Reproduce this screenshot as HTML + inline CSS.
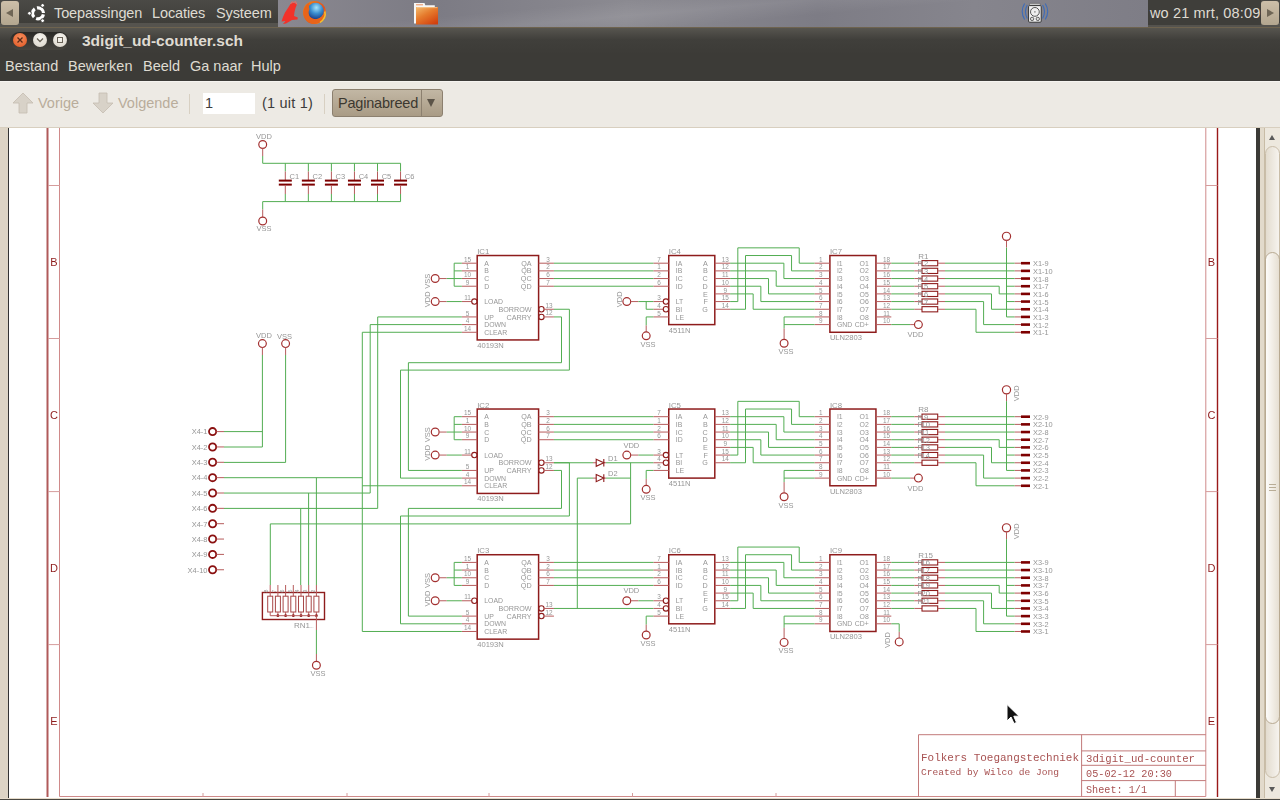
<!DOCTYPE html>
<html><head><meta charset="utf-8">
<style>
*{margin:0;padding:0;box-sizing:border-box}
html,body{width:1280px;height:800px;overflow:hidden;background:#3c3b37;font-family:"Liberation Sans",sans-serif}
.abs{position:absolute}
#panel{left:0;top:0;width:1280px;height:27px;background:linear-gradient(#4b4a46,#3c3b37)}
#wall{left:278px;top:0;width:870px;height:27px;background:linear-gradient(175deg,rgba(255,255,255,0) 30%,rgba(255,255,255,.08) 45%,rgba(255,255,255,0) 60%),linear-gradient(90deg,#8a8890 0%,#7c7b84 18%,#8b8a91 40%,#7d7c85 62%,#86858d 80%,#7e7d86 100%)}
#pline{left:0;top:27px;width:1280px;height:1px;background:#6e634f}
.ptxt{color:#dfdbd2;font-size:14.5px;top:5px;letter-spacing:-0.1px}
#title{left:0;top:28px;width:1280px;height:26px;background:linear-gradient(#57554f,#403f3b 45%,#3c3b37)}
#menu{left:0;top:54px;width:1280px;height:27px;background:#3c3b37}
.mtxt{color:#dfdbd2;font-size:14.5px;top:58px}
#tool{left:0;top:81px;width:1280px;height:46px;background:#edeae4;border-top:1px solid #f6f4f0}
#tline{left:0;top:127px;width:1280px;height:1px;background:#d8cfbf}
#doc{left:0;top:127px;width:1280px;height:673px;background:#fff}
</style></head><body>
<div id="panel" class="abs"></div>
<div class="abs" style="left:0;top:23px;width:1280px;height:4px;background:#55534e"></div>
<div id="wall" class="abs"></div>
<div id="pline" class="abs"></div>
<!-- left panel button -->
<div class="abs" style="left:1px;top:1px;width:18px;height:24px;border-radius:3px;background:linear-gradient(#cdbfa9,#b3a68f)"></div>
<div class="abs" style="left:6px;top:9px;width:0;height:0;border-top:4.5px solid transparent;border-bottom:4.5px solid transparent;border-right:7px solid #6f6656"></div>
<svg class="abs" style="left:26px;top:2px" width="22" height="22" viewBox="0 0 22 22">
 <circle cx="12" cy="11.3" r="5.5" stroke="#fff" stroke-width="3.2" fill="none" stroke-dasharray="9.2 2.32" stroke-dashoffset="-1.16"/>
 <circle cx="3.45" cy="11.3" r="1.9" fill="#fff" stroke="#3f3e3a" stroke-width="1"/><circle cx="16.6" cy="3.4" r="1.9" fill="#fff" stroke="#3f3e3a" stroke-width="1"/><circle cx="16.6" cy="18.65" r="1.9" fill="#fff" stroke="#3f3e3a" stroke-width="1"/>
</svg>
<div class="abs ptxt" style="left:54px">Toepassingen</div>
<div class="abs ptxt" style="left:152px">Locaties</div>
<div class="abs ptxt" style="left:216px">Systeem</div>
<!-- eagle icon -->
<svg class="abs" style="left:280px;top:0px" width="20" height="26" viewBox="0 0 20 26">
 <path d="M13.8 2.5 L16.9 4.5 L15.5 8 L14.5 12 L14 16 L17.8 17.5 L17.5 19.5 L12 20 L6 23.5 L3 24 L5.5 21 L1.5 21.5 L3 17 L5 12.5 L8 8 L10.5 4 Z" fill="#f2322a"/>
 <path d="M10.5 4 L12 1.8 L13.8 2.5 L15.5 1.5 L16.9 4.5" fill="none" stroke="#f06a60" stroke-width="1"/>
</svg>
<svg class="abs" style="left:302px;top:0px" width="26" height="26" viewBox="0 0 26 26">
 <defs>
  <radialGradient id="glb" cx="0.55" cy="0.3" r="0.7"><stop offset="0" stop-color="#a8e4fa"/><stop offset="0.5" stop-color="#3a8fd0"/><stop offset="1" stop-color="#1b3f8a"/></radialGradient>
  <linearGradient id="fox" x1="0" y1="0" x2="1" y2="1"><stop offset="0" stop-color="#f08a1c"/><stop offset="0.6" stop-color="#e4501a"/><stop offset="1" stop-color="#f4b02a"/></linearGradient>
 </defs>
 <circle cx="12.5" cy="12.5" r="11.5" fill="url(#fox)"/>
 <circle cx="13.5" cy="11" r="8.3" fill="url(#glb)"/>
 <path d="M1.5 11 Q3 4 8 2.5 Q6 6 7.5 9 Q5.5 13 8 17 Q12 20.5 17 18.5 Q21.5 16 22.8 11.5 Q24.5 18 18 22.5 Q12 25.5 6 22 Q1 18 1.5 11 Z" fill="#e8641a"/>
 <path d="M22.8 11.5 Q24.5 18 18 22.5" stroke="#f6c02e" stroke-width="1.5" fill="none"/>
</svg>
<!-- folder -->
<svg class="abs" style="left:412px;top:1px" width="28" height="26" viewBox="0 0 28 26">
 <defs><linearGradient id="fld" x1="0.1" y1="0" x2="0.8" y2="1"><stop offset="0" stop-color="#f2b466"/><stop offset="0.45" stop-color="#e57a2c"/><stop offset="1" stop-color="#d2400e"/></linearGradient></defs>
 <path d="M2 2 H12.5 L13.3 4.2 H22.8 V22.5 H2 Z" fill="#f6f6f4"/>
 <rect x="4" y="3.3" width="7" height="1" fill="#e89060"/>
 <path d="M4 6 H26 V23.5 H4 Z" fill="url(#fld)"/>
 <path d="M4.7 6.6 H25.3" stroke="#f8c890" stroke-width="0.8"/>
</svg>
<!-- drive icon -->
<svg class="abs" style="left:1020px;top:0px" width="30" height="26" viewBox="1020 0 30 26">
 <path d="M1027.3 5 Q1023.5 11.5 1027.3 18.5 M1024.6 3.5 Q1019.8 11.5 1024.6 19.5 M1042.6 5 Q1046.4 11.5 1042.6 18.5 M1045.3 3.5 Q1050.1 11.5 1045.3 19.5" stroke="#3e6cb8" stroke-width="1.1" fill="none"/>
 <rect x="1029.5" y="3.4" width="10.8" height="1.6" rx="0.8" fill="#f4f4f4" stroke="#444" stroke-width="0.5"/>
 <rect x="1028.6" y="5.6" width="12.6" height="16.6" rx="1" fill="#f2f2f2" stroke="#333" stroke-width="1"/>
 <circle cx="1034.9" cy="11.9" r="4.4" fill="#eee" stroke="#444" stroke-width="0.9"/>
 <circle cx="1034.9" cy="11.9" r="0.8" fill="#888"/>
 <circle cx="1032.1" cy="18.9" r="1.7" fill="#ddd" stroke="#444" stroke-width="0.8"/>
 <circle cx="1037.8" cy="18.9" r="1.7" fill="#ddd" stroke="#444" stroke-width="0.8"/>
</svg>
<!-- clock -->
<div class="abs" style="left:1148px;top:0;width:113px;height:25px;background:#3f3e3a"></div>
<div class="abs ptxt" style="left:1150px;letter-spacing:0.15px">wo 21 mrt, 08:09</div>
<div class="abs" style="left:1261px;top:1px;width:18px;height:24px;border-radius:3px;background:linear-gradient(#cdbfa9,#b3a68f)"></div>
<div class="abs" style="left:1267px;top:9px;width:0;height:0;border-top:4.5px solid transparent;border-bottom:4.5px solid transparent;border-left:7px solid #6f6656"></div>

<!-- title bar -->
<div id="title" class="abs"></div>
<div class="abs" style="left:10px;top:32px;width:59px;height:18px;border-radius:10px;background:linear-gradient(#2a2926,#47453f)"></div>
<div class="abs" style="left:13px;top:33px;width:14px;height:14px;border-radius:50%;background:radial-gradient(circle at 50% 35%,#f7915f,#e0531f)"></div>
<svg class="abs" style="left:13px;top:33px" width="14" height="14"><path d="M4.5 4.5 L9.5 9.5 M9.5 4.5 L4.5 9.5" stroke="#5a2a18" stroke-width="1.3"/></svg>
<div class="abs" style="left:33px;top:33px;width:14px;height:14px;border-radius:50%;background:radial-gradient(circle at 50% 35%,#f8f6f1,#d8d2c6)"></div>
<svg class="abs" style="left:33px;top:33px" width="14" height="14"><path d="M4 5.5 L7 8.5 L10 5.5" stroke="#6a6358" stroke-width="1.3" fill="none"/></svg>
<div class="abs" style="left:53px;top:33px;width:14px;height:14px;border-radius:50%;background:radial-gradient(circle at 50% 35%,#f8f6f1,#d8d2c6)"></div>
<div class="abs" style="left:57px;top:37px;width:6px;height:6px;border:1.3px solid #6a6358"></div>
<div class="abs" style="left:82px;top:32px;color:#dfdbd2;font-size:15.5px;font-weight:bold">3digit_ud-counter.sch</div>

<!-- menu -->
<div id="menu" class="abs"></div>
<div class="abs mtxt" style="left:5px">Bestand</div>
<div class="abs mtxt" style="left:68px">Bewerken</div>
<div class="abs mtxt" style="left:143px">Beeld</div>
<div class="abs mtxt" style="left:190px">Ga naar</div>
<div class="abs mtxt" style="left:251px">Hulp</div>

<!-- toolbar -->
<div id="tool" class="abs"></div>
<svg class="abs" style="left:12px;top:92px" width="22" height="23" viewBox="0 0 22 23">
 <path d="M11 1 L21 11 L15 11 L15 21 L7 21 L7 11 L1 11 Z" fill="#d8d2c8" stroke="#c5bdb0" stroke-width="0.8"/>
</svg>
<div class="abs" style="left:38px;top:95px;color:#b9ad9b;font-size:14.5px">Vorige</div>
<svg class="abs" style="left:92px;top:92px" width="22" height="23" viewBox="0 0 22 23">
 <path d="M7 1 L15 1 L15 11 L21 11 L11 21 L1 11 L7 11 Z" fill="#d8d2c8" stroke="#c5bdb0" stroke-width="0.8"/>
</svg>
<div class="abs" style="left:118px;top:95px;color:#b9ad9b;font-size:14.5px">Volgende</div>
<div class="abs" style="left:189px;top:94px;width:1px;height:20px;background:#d8d0c2"></div>
<div class="abs" style="left:203px;top:93px;width:52px;height:21px;background:#fff"></div>
<div class="abs" style="left:205px;top:95px;color:#3c3c3c;font-size:14.5px">1</div>
<div class="abs" style="left:262px;top:95px;color:#3c3c3c;font-size:14.5px;letter-spacing:0.2px">(1 uit 1)</div>
<div class="abs" style="left:324px;top:94px;width:1px;height:20px;background:#d8d0c2"></div>
<div class="abs" style="left:332px;top:89px;width:111px;height:28px;border-radius:3px;border:1px solid #8c806f;background:linear-gradient(#c2b7a4,#a99b85)"></div>
<div class="abs" style="left:421px;top:90px;width:1px;height:26px;background:#8c806f"></div>
<div class="abs" style="left:338px;top:95px;color:#3c3830;font-size:14.5px;letter-spacing:-0.2px">Paginabreed</div>
<div class="abs" style="left:427px;top:99px;width:0;height:0;border-left:4.5px solid transparent;border-right:4.5px solid transparent;border-top:8px solid #5c5448"></div>
<div id="tline" class="abs"></div>

<!-- document area -->
<div class="abs" style="left:0;top:128px;width:1280px;height:672px;background:#ede8de"></div>
<div class="abs" style="left:0;top:128px;width:8px;height:670px;background:#ddd4c5"></div>
<div class="abs" style="left:8px;top:128px;width:1px;height:670px;background:#333"></div>
<div class="abs" style="left:9px;top:128px;width:1247px;height:670px;background:#fff"></div>
<div class="abs" style="left:1256px;top:128px;width:4px;height:670px;background:#3b3a36"></div>
<div class="abs" style="left:1260px;top:128px;width:4px;height:670px;background:#e2dacb"></div>
<div class="abs" style="left:1264px;top:128px;width:1px;height:670px;background:#c8bca6"></div>
<div class="abs" style="left:1265px;top:128px;width:15px;height:670px;background:#ede8de"></div>
<div class="abs" style="left:1269px;top:135px;width:0;height:0;border-left:3px solid transparent;border-right:3px solid transparent;border-bottom:5px solid #5a5a5a"></div>
<div class="abs" style="left:1265px;top:146px;width:15px;height:632px;border-radius:8px;border:1px solid #c9bda8;background:linear-gradient(90deg,#e3dccf,#f6f3ee)"></div>
<div class="abs" style="left:1265px;top:252px;width:15px;height:472px;border-radius:8px;border:1px solid #b8aa92;background:linear-gradient(90deg,#fdfcfa,#e6dfd2)"></div>
<div class="abs" style="left:1269px;top:484px;width:7px;height:1px;background:#b9ad96"></div>
<div class="abs" style="left:1269px;top:487px;width:7px;height:1px;background:#b9ad96"></div>
<div class="abs" style="left:1269px;top:490px;width:7px;height:1px;background:#b9ad96"></div>
<div class="abs" style="left:1269px;top:787px;width:0;height:0;border-left:3px solid transparent;border-right:3px solid transparent;border-top:5px solid #5a5a5a"></div>
<div class="abs" style="left:0;top:798px;width:1280px;height:1px;background:#e6dccb"></div>
<div class="abs" style="left:0;top:799px;width:1280px;height:1px;background:#4a4842"></div>

<svg class="abs" style="left:0;top:0;will-change:transform" width="1280" height="798" viewBox="0 0 1280 798" font-family="Liberation Sans, sans-serif">
<g id="frame">
 <path d="M47.5 128 V797" stroke="#b05a5a" stroke-width="2"/>
 <path d="M59.5 128 V796.5 H1205.8 V128" stroke="#cf8a8a" stroke-width="1" fill="none"/>
 <path d="M1217.5 128 V797" stroke="#9a1a1a" stroke-width="1.4"/>
 <path d="M48 185.5 H60 M48 338.5 H60 M48 491.6 H60 M48 644.6 H60" stroke="#d59c9c" stroke-width="1"/>
 <path d="M1205.8 185.5 H1217.5 M1205.8 338.5 H1217.5 M1205.8 491.6 H1217.5 M1205.8 644.6 H1217.5" stroke="#d59c9c" stroke-width="1"/>
 <path d="M203 796.5 V793 M347 796.5 V793 M489 796.5 V793 M632.5 796.5 V793 M776 796.5 V793" stroke="#d59c9c" stroke-width="1"/>
 <g fill="#8e1c1c" font-size="11" text-anchor="middle">
  <text x="54" y="266">B</text><text x="54" y="419">C</text><text x="54" y="572">D</text><text x="54" y="725">E</text>
  <text x="1211.5" y="266">B</text><text x="1211.5" y="419">C</text><text x="1211.5" y="572">D</text><text x="1211.5" y="725">E</text>
 </g>
</g>
<g id="tblock" stroke="#c27a7a" stroke-width="1" fill="none">
 <path d="M918.5 796.5 V734.7 H1205.8 M1081.6 734.7 V796.5 M1081.6 750.9 H1205.8 M1081.6 765.3 H1205.8 M1081.6 780.6 H1205.8 M1175.3 780.6 V796.5"/>
</g>
<g fill="#a85252" font-family="Liberation Mono, monospace">
 <text x="921" y="761.3" font-size="11.2" textLength="158" lengthAdjust="spacingAndGlyphs">Folkers Toegangstechniek</text>
 <text x="921" y="775.3" font-size="9.5" textLength="138" lengthAdjust="spacingAndGlyphs">Created by Wilco de Jong</text>
 <text x="1086" y="762" font-size="11.2" textLength="109" lengthAdjust="spacingAndGlyphs">3digit_ud-counter</text>
 <text x="1086" y="777" font-size="11.2" textLength="86" lengthAdjust="spacingAndGlyphs">05-02-12 20:30</text>
 <text x="1086" y="792.5" font-size="11.2" textLength="61" lengthAdjust="spacingAndGlyphs">Sheet: 1/1</text>
</g>
<g id="sch">
<rect x="477.20" y="255.52" width="61.40" height="84.42" stroke="#8e1c1c" stroke-width="1.5" fill="none"/>
<text x="477.20" y="254.02" font-size="7.8" text-anchor="start" fill="#969696">IC1</text>
<text x="477.20" y="347.95" font-size="7.6" text-anchor="start" fill="#969696">40193N</text>
<path d="M461.85 263.20 L477.20 263.20" stroke="#b65c5c" stroke-width="1" fill="none"/>
<text x="484.20" y="265.80" font-size="6.9" text-anchor="start" fill="#969696">A</text>
<text x="467.60" y="261.80" font-size="6.4" text-anchor="middle" fill="#969696">15</text>
<path d="M461.85 270.88 L477.20 270.88" stroke="#b65c5c" stroke-width="1" fill="none"/>
<text x="484.20" y="273.48" font-size="6.9" text-anchor="start" fill="#969696">B</text>
<text x="467.60" y="269.48" font-size="6.4" text-anchor="middle" fill="#969696">1</text>
<path d="M461.85 278.55 L477.20 278.55" stroke="#b65c5c" stroke-width="1" fill="none"/>
<text x="484.20" y="281.15" font-size="6.9" text-anchor="start" fill="#969696">C</text>
<text x="467.60" y="277.15" font-size="6.4" text-anchor="middle" fill="#969696">10</text>
<path d="M461.85 286.22 L477.20 286.22" stroke="#b65c5c" stroke-width="1" fill="none"/>
<text x="484.20" y="288.82" font-size="6.9" text-anchor="start" fill="#969696">D</text>
<text x="467.60" y="284.82" font-size="6.4" text-anchor="middle" fill="#969696">9</text>
<path d="M461.85 301.57 L471.70 301.57" stroke="#b65c5c" stroke-width="1" fill="none"/>
<circle cx="474.40" cy="301.57" r="2.70" stroke="#8e1c1c" stroke-width="1.1" fill="none"/>
<text x="484.20" y="304.18" font-size="6.9" text-anchor="start" fill="#969696">LOAD</text>
<text x="467.60" y="300.18" font-size="6.4" text-anchor="middle" fill="#969696">11</text>
<path d="M461.85 316.93 L477.20 316.93" stroke="#b65c5c" stroke-width="1" fill="none"/>
<text x="484.20" y="319.53" font-size="6.9" text-anchor="start" fill="#969696">UP</text>
<text x="467.60" y="315.53" font-size="6.4" text-anchor="middle" fill="#969696">5</text>
<path d="M461.85 324.60 L477.20 324.60" stroke="#b65c5c" stroke-width="1" fill="none"/>
<text x="484.20" y="327.20" font-size="6.9" text-anchor="start" fill="#969696">DOWN</text>
<text x="467.60" y="323.20" font-size="6.4" text-anchor="middle" fill="#969696">4</text>
<path d="M461.85 332.27 L477.20 332.27" stroke="#b65c5c" stroke-width="1" fill="none"/>
<text x="484.20" y="334.88" font-size="6.9" text-anchor="start" fill="#969696">CLEAR</text>
<text x="467.60" y="330.88" font-size="6.4" text-anchor="middle" fill="#969696">14</text>
<path d="M538.60 263.20 L553.95 263.20" stroke="#b65c5c" stroke-width="1" fill="none"/>
<text x="531.60" y="265.80" font-size="7.2" text-anchor="end" fill="#969696">QA</text>
<text x="548.10" y="261.80" font-size="6.4" text-anchor="middle" fill="#969696">3</text>
<path d="M538.60 270.88 L553.95 270.88" stroke="#b65c5c" stroke-width="1" fill="none"/>
<text x="531.60" y="273.48" font-size="7.2" text-anchor="end" fill="#969696">QB</text>
<text x="548.10" y="269.48" font-size="6.4" text-anchor="middle" fill="#969696">2</text>
<path d="M538.60 278.55 L553.95 278.55" stroke="#b65c5c" stroke-width="1" fill="none"/>
<text x="531.60" y="281.15" font-size="7.2" text-anchor="end" fill="#969696">QC</text>
<text x="548.10" y="277.15" font-size="6.4" text-anchor="middle" fill="#969696">6</text>
<path d="M538.60 286.22 L553.95 286.22" stroke="#b65c5c" stroke-width="1" fill="none"/>
<text x="531.60" y="288.82" font-size="7.2" text-anchor="end" fill="#969696">QD</text>
<text x="548.10" y="284.82" font-size="6.4" text-anchor="middle" fill="#969696">7</text>
<circle cx="541.40" cy="309.25" r="2.70" stroke="#8e1c1c" stroke-width="1.1" fill="none"/>
<path d="M544.10 309.25 L553.95 309.25" stroke="#b65c5c" stroke-width="1" fill="none"/>
<text x="531.60" y="311.85" font-size="7.2" text-anchor="end" fill="#969696">BORROW</text>
<text x="549.10" y="307.65" font-size="6.4" text-anchor="middle" fill="#969696">13</text>
<circle cx="541.40" cy="316.93" r="2.70" stroke="#8e1c1c" stroke-width="1.1" fill="none"/>
<path d="M544.10 316.93 L553.95 316.93" stroke="#b65c5c" stroke-width="1" fill="none"/>
<text x="531.60" y="319.53" font-size="7.2" text-anchor="end" fill="#969696">CARRY</text>
<text x="549.10" y="315.32" font-size="6.4" text-anchor="middle" fill="#969696">12</text>
<rect x="668.75" y="255.52" width="46.05" height="69.08" stroke="#8e1c1c" stroke-width="1.5" fill="none"/>
<text x="668.75" y="254.02" font-size="7.8" text-anchor="start" fill="#969696">IC4</text>
<text x="668.75" y="332.60" font-size="7.6" text-anchor="start" fill="#969696">4511N</text>
<path d="M653.40 263.20 L668.75 263.20" stroke="#b65c5c" stroke-width="1" fill="none"/>
<text x="675.75" y="265.80" font-size="6.9" text-anchor="start" fill="#969696">IA</text>
<text x="659.15" y="261.80" font-size="6.4" text-anchor="middle" fill="#969696">7</text>
<path d="M653.40 270.88 L668.75 270.88" stroke="#b65c5c" stroke-width="1" fill="none"/>
<text x="675.75" y="273.48" font-size="6.9" text-anchor="start" fill="#969696">IB</text>
<text x="659.15" y="269.48" font-size="6.4" text-anchor="middle" fill="#969696">1</text>
<path d="M653.40 278.55 L668.75 278.55" stroke="#b65c5c" stroke-width="1" fill="none"/>
<text x="675.75" y="281.15" font-size="6.9" text-anchor="start" fill="#969696">IC</text>
<text x="659.15" y="277.15" font-size="6.4" text-anchor="middle" fill="#969696">2</text>
<path d="M653.40 286.22 L668.75 286.22" stroke="#b65c5c" stroke-width="1" fill="none"/>
<text x="675.75" y="288.82" font-size="6.9" text-anchor="start" fill="#969696">ID</text>
<text x="659.15" y="284.82" font-size="6.4" text-anchor="middle" fill="#969696">6</text>
<path d="M653.40 301.57 L663.25 301.57" stroke="#b65c5c" stroke-width="1" fill="none"/>
<circle cx="665.95" cy="301.57" r="2.70" stroke="#8e1c1c" stroke-width="1.1" fill="none"/>
<text x="675.75" y="304.18" font-size="6.9" text-anchor="start" fill="#969696">LT</text>
<text x="659.15" y="300.18" font-size="6.4" text-anchor="middle" fill="#969696">3</text>
<path d="M653.40 309.25 L663.25 309.25" stroke="#b65c5c" stroke-width="1" fill="none"/>
<circle cx="665.95" cy="309.25" r="2.70" stroke="#8e1c1c" stroke-width="1.1" fill="none"/>
<text x="675.75" y="311.85" font-size="6.9" text-anchor="start" fill="#969696">BI</text>
<text x="659.15" y="307.85" font-size="6.4" text-anchor="middle" fill="#969696">4</text>
<path d="M653.40 316.93 L668.75 316.93" stroke="#b65c5c" stroke-width="1" fill="none"/>
<text x="675.75" y="319.53" font-size="6.9" text-anchor="start" fill="#969696">LE</text>
<text x="659.15" y="315.53" font-size="6.4" text-anchor="middle" fill="#969696">5</text>
<path d="M714.80 263.20 L730.15 263.20" stroke="#b65c5c" stroke-width="1" fill="none"/>
<text x="707.80" y="265.80" font-size="7.2" text-anchor="end" fill="#969696">A</text>
<text x="725.30" y="261.80" font-size="6.4" text-anchor="middle" fill="#969696">13</text>
<path d="M714.80 270.88 L730.15 270.88" stroke="#b65c5c" stroke-width="1" fill="none"/>
<text x="707.80" y="273.48" font-size="7.2" text-anchor="end" fill="#969696">B</text>
<text x="725.30" y="269.48" font-size="6.4" text-anchor="middle" fill="#969696">12</text>
<path d="M714.80 278.55 L730.15 278.55" stroke="#b65c5c" stroke-width="1" fill="none"/>
<text x="707.80" y="281.15" font-size="7.2" text-anchor="end" fill="#969696">C</text>
<text x="725.30" y="277.15" font-size="6.4" text-anchor="middle" fill="#969696">11</text>
<path d="M714.80 286.22 L730.15 286.22" stroke="#b65c5c" stroke-width="1" fill="none"/>
<text x="707.80" y="288.82" font-size="7.2" text-anchor="end" fill="#969696">D</text>
<text x="725.30" y="284.82" font-size="6.4" text-anchor="middle" fill="#969696">10</text>
<path d="M714.80 293.90 L730.15 293.90" stroke="#b65c5c" stroke-width="1" fill="none"/>
<text x="707.80" y="296.50" font-size="7.2" text-anchor="end" fill="#969696">E</text>
<text x="725.30" y="292.50" font-size="6.4" text-anchor="middle" fill="#969696">9</text>
<path d="M714.80 301.57 L730.15 301.57" stroke="#b65c5c" stroke-width="1" fill="none"/>
<text x="707.80" y="304.18" font-size="7.2" text-anchor="end" fill="#969696">F</text>
<text x="725.30" y="300.18" font-size="6.4" text-anchor="middle" fill="#969696">15</text>
<path d="M714.80 309.25 L730.15 309.25" stroke="#b65c5c" stroke-width="1" fill="none"/>
<text x="707.80" y="311.85" font-size="7.2" text-anchor="end" fill="#969696">G</text>
<text x="725.30" y="307.85" font-size="6.4" text-anchor="middle" fill="#969696">14</text>
<rect x="829.90" y="255.52" width="46.05" height="76.75" stroke="#8e1c1c" stroke-width="1.5" fill="none"/>
<text x="829.90" y="254.02" font-size="7.8" text-anchor="start" fill="#969696">IC7</text>
<text x="829.90" y="340.27" font-size="7.6" text-anchor="start" fill="#969696">ULN2803</text>
<path d="M814.55 263.20 L829.90 263.20" stroke="#b65c5c" stroke-width="1" fill="none"/>
<text x="836.90" y="265.80" font-size="6.9" text-anchor="start" fill="#969696">I1</text>
<text x="820.70" y="261.80" font-size="6.4" text-anchor="middle" fill="#969696">1</text>
<path d="M875.95 263.20 L891.30 263.20" stroke="#b65c5c" stroke-width="1" fill="none"/>
<text x="868.75" y="265.80" font-size="6.9" text-anchor="end" fill="#969696">O1</text>
<text x="886.45" y="261.80" font-size="6.4" text-anchor="middle" fill="#969696">18</text>
<path d="M814.55 270.88 L829.90 270.88" stroke="#b65c5c" stroke-width="1" fill="none"/>
<text x="836.90" y="273.48" font-size="6.9" text-anchor="start" fill="#969696">I2</text>
<text x="820.70" y="269.48" font-size="6.4" text-anchor="middle" fill="#969696">2</text>
<path d="M875.95 270.88 L891.30 270.88" stroke="#b65c5c" stroke-width="1" fill="none"/>
<text x="868.75" y="273.48" font-size="6.9" text-anchor="end" fill="#969696">O2</text>
<text x="886.45" y="269.48" font-size="6.4" text-anchor="middle" fill="#969696">17</text>
<path d="M814.55 278.55 L829.90 278.55" stroke="#b65c5c" stroke-width="1" fill="none"/>
<text x="836.90" y="281.15" font-size="6.9" text-anchor="start" fill="#969696">I3</text>
<text x="820.70" y="277.15" font-size="6.4" text-anchor="middle" fill="#969696">3</text>
<path d="M875.95 278.55 L891.30 278.55" stroke="#b65c5c" stroke-width="1" fill="none"/>
<text x="868.75" y="281.15" font-size="6.9" text-anchor="end" fill="#969696">O3</text>
<text x="886.45" y="277.15" font-size="6.4" text-anchor="middle" fill="#969696">16</text>
<path d="M814.55 286.22 L829.90 286.22" stroke="#b65c5c" stroke-width="1" fill="none"/>
<text x="836.90" y="288.82" font-size="6.9" text-anchor="start" fill="#969696">I4</text>
<text x="820.70" y="284.82" font-size="6.4" text-anchor="middle" fill="#969696">4</text>
<path d="M875.95 286.22 L891.30 286.22" stroke="#b65c5c" stroke-width="1" fill="none"/>
<text x="868.75" y="288.82" font-size="6.9" text-anchor="end" fill="#969696">O4</text>
<text x="886.45" y="284.82" font-size="6.4" text-anchor="middle" fill="#969696">15</text>
<path d="M814.55 293.90 L829.90 293.90" stroke="#b65c5c" stroke-width="1" fill="none"/>
<text x="836.90" y="296.50" font-size="6.9" text-anchor="start" fill="#969696">I5</text>
<text x="820.70" y="292.50" font-size="6.4" text-anchor="middle" fill="#969696">5</text>
<path d="M875.95 293.90 L891.30 293.90" stroke="#b65c5c" stroke-width="1" fill="none"/>
<text x="868.75" y="296.50" font-size="6.9" text-anchor="end" fill="#969696">O5</text>
<text x="886.45" y="292.50" font-size="6.4" text-anchor="middle" fill="#969696">14</text>
<path d="M814.55 301.57 L829.90 301.57" stroke="#b65c5c" stroke-width="1" fill="none"/>
<text x="836.90" y="304.18" font-size="6.9" text-anchor="start" fill="#969696">I6</text>
<text x="820.70" y="300.18" font-size="6.4" text-anchor="middle" fill="#969696">6</text>
<path d="M875.95 301.57 L891.30 301.57" stroke="#b65c5c" stroke-width="1" fill="none"/>
<text x="868.75" y="304.18" font-size="6.9" text-anchor="end" fill="#969696">O6</text>
<text x="886.45" y="300.18" font-size="6.4" text-anchor="middle" fill="#969696">13</text>
<path d="M814.55 309.25 L829.90 309.25" stroke="#b65c5c" stroke-width="1" fill="none"/>
<text x="836.90" y="311.85" font-size="6.9" text-anchor="start" fill="#969696">I7</text>
<text x="820.70" y="307.85" font-size="6.4" text-anchor="middle" fill="#969696">7</text>
<path d="M875.95 309.25 L891.30 309.25" stroke="#b65c5c" stroke-width="1" fill="none"/>
<text x="868.75" y="311.85" font-size="6.9" text-anchor="end" fill="#969696">O7</text>
<text x="886.45" y="307.85" font-size="6.4" text-anchor="middle" fill="#969696">12</text>
<path d="M814.55 316.93 L829.90 316.93" stroke="#b65c5c" stroke-width="1" fill="none"/>
<text x="836.90" y="319.53" font-size="6.9" text-anchor="start" fill="#969696">I8</text>
<text x="820.70" y="315.53" font-size="6.4" text-anchor="middle" fill="#969696">8</text>
<path d="M875.95 316.93 L891.30 316.93" stroke="#b65c5c" stroke-width="1" fill="none"/>
<text x="868.75" y="319.53" font-size="6.9" text-anchor="end" fill="#969696">O8</text>
<text x="886.45" y="315.53" font-size="6.4" text-anchor="middle" fill="#969696">11</text>
<path d="M814.55 324.60 L829.90 324.60" stroke="#b65c5c" stroke-width="1" fill="none"/>
<text x="836.90" y="327.20" font-size="6.9" text-anchor="start" fill="#969696">GND</text>
<text x="820.70" y="323.20" font-size="6.4" text-anchor="middle" fill="#969696">9</text>
<path d="M875.95 324.60 L891.30 324.60" stroke="#b65c5c" stroke-width="1" fill="none"/>
<text x="868.75" y="327.20" font-size="6.9" text-anchor="end" fill="#969696">CD+</text>
<text x="886.45" y="323.20" font-size="6.4" text-anchor="middle" fill="#969696">10</text>
<path d="M454.18 263.20 L454.18 286.22" stroke="#52ad52" stroke-width="1" fill="none"/>
<path d="M454.18 263.20 L461.85 263.20" stroke="#52ad52" stroke-width="1" fill="none"/>
<path d="M454.18 270.88 L461.85 270.88" stroke="#52ad52" stroke-width="1" fill="none"/>
<path d="M454.18 278.55 L461.85 278.55" stroke="#52ad52" stroke-width="1" fill="none"/>
<path d="M454.18 286.22 L461.85 286.22" stroke="#52ad52" stroke-width="1" fill="none"/>
<circle cx="435.20" cy="278.55" r="3.90" stroke="#a33030" stroke-width="1.2" fill="none"/>
<path d="M439.10 278.55 L446.70 278.55" stroke="#b65c5c" stroke-width="1" fill="none"/>
<path d="M446.70 278.55 L454.18 278.55" stroke="#52ad52" stroke-width="1" fill="none"/>
<text x="430.40" y="281.35" font-size="7.5" text-anchor="middle" fill="#969696" transform="rotate(-90 430.40 281.35)">VSS</text>
<circle cx="435.20" cy="301.57" r="3.90" stroke="#a33030" stroke-width="1.2" fill="none"/>
<path d="M439.10 301.57 L446.70 301.57" stroke="#b65c5c" stroke-width="1" fill="none"/>
<path d="M446.70 301.57 L461.85 301.57" stroke="#52ad52" stroke-width="1" fill="none"/>
<text x="430.40" y="299.27" font-size="7.5" text-anchor="middle" fill="#969696" transform="rotate(-90 430.40 299.27)">VDD</text>
<path d="M553.95 263.20 L653.40 263.20" stroke="#52ad52" stroke-width="1" fill="none"/>
<path d="M553.95 270.88 L653.40 270.88" stroke="#52ad52" stroke-width="1" fill="none"/>
<path d="M553.95 278.55 L653.40 278.55" stroke="#52ad52" stroke-width="1" fill="none"/>
<path d="M553.95 286.22 L653.40 286.22" stroke="#52ad52" stroke-width="1" fill="none"/>
<circle cx="626.80" cy="301.57" r="3.90" stroke="#a33030" stroke-width="1.2" fill="none"/>
<path d="M630.70 301.57 L638.40 301.57" stroke="#b65c5c" stroke-width="1" fill="none"/>
<path d="M638.40 301.57 L653.40 301.57" stroke="#52ad52" stroke-width="1" fill="none"/>
<text x="621.80" y="299.27" font-size="7.5" text-anchor="middle" fill="#969696" transform="rotate(-90 621.80 299.27)">VDD</text>
<path d="M646.20 301.57 L646.20 309.25 L653.40 309.25" stroke="#52ad52" stroke-width="1" fill="none"/>
<path d="M653.40 316.93 L646.20 316.93 L646.20 325.43" stroke="#52ad52" stroke-width="1" fill="none"/>
<path d="M646.20 325.43 L646.20 331.93" stroke="#b65c5c" stroke-width="1" fill="none"/>
<circle cx="646.20" cy="335.82" r="3.90" stroke="#a33030" stroke-width="1.2" fill="none"/>
<text x="648.00" y="346.93" font-size="7.5" text-anchor="middle" fill="#969696">VSS</text>
<path d="M730.15 263.20 L783.88 263.20 L783.88 278.55 L814.55 278.55" stroke="#52ad52" stroke-width="1" fill="none"/>
<path d="M730.15 270.88 L776.20 270.88 L776.20 286.22 L814.55 286.22" stroke="#52ad52" stroke-width="1" fill="none"/>
<path d="M730.15 278.55 L768.52 278.55 L768.52 293.90 L814.55 293.90" stroke="#52ad52" stroke-width="1" fill="none"/>
<path d="M730.15 286.22 L760.85 286.22 L760.85 301.57 L814.55 301.57" stroke="#52ad52" stroke-width="1" fill="none"/>
<path d="M730.15 293.90 L753.17 293.90 L753.17 309.25 L814.55 309.25" stroke="#52ad52" stroke-width="1" fill="none"/>
<path d="M730.15 301.57 L737.82 301.57 L737.82 247.85 L799.23 247.85 L799.23 263.20 L814.55 263.20" stroke="#52ad52" stroke-width="1" fill="none"/>
<path d="M730.15 309.25 L745.50 309.25 L745.50 255.52 L791.55 255.52 L791.55 270.88 L814.55 270.88" stroke="#52ad52" stroke-width="1" fill="none"/>
<path d="M814.55 316.93 L784.10 316.93 L784.10 328.60" stroke="#52ad52" stroke-width="1" fill="none"/>
<path d="M784.10 324.60 L814.55 324.60" stroke="#52ad52" stroke-width="1" fill="none"/>
<path d="M784.10 328.60 L784.10 339.20" stroke="#b65c5c" stroke-width="1" fill="none"/>
<circle cx="784.10" cy="343.20" r="3.90" stroke="#a33030" stroke-width="1.2" fill="none"/>
<text x="786.10" y="354.10" font-size="7.5" text-anchor="middle" fill="#969696">VSS</text>
<path d="M891.30 324.60 L910.12 324.60" stroke="#52ad52" stroke-width="1" fill="none"/>
<path d="M910.12 324.60 L914.50 324.60" stroke="#b65c5c" stroke-width="1" fill="none"/>
<circle cx="918.40" cy="324.60" r="3.90" stroke="#a33030" stroke-width="1.2" fill="none"/>
<text x="915.50" y="337.10" font-size="7.5" text-anchor="middle" fill="#969696">VDD</text>
<path d="M891.30 263.20 L914.32 263.20" stroke="#52ad52" stroke-width="1" fill="none"/>
<path d="M914.32 263.20 L922.00 263.20" stroke="#b65c5c" stroke-width="1" fill="none"/>
<rect x="922.00" y="260.60" width="15.70" height="5.20" stroke="#8e1c1c" stroke-width="1.1" fill="none"/>
<path d="M937.70 263.20 L945.00 263.20" stroke="#b65c5c" stroke-width="1" fill="none"/>
<path d="M891.30 270.88 L914.32 270.88" stroke="#52ad52" stroke-width="1" fill="none"/>
<path d="M914.32 270.88 L922.00 270.88" stroke="#b65c5c" stroke-width="1" fill="none"/>
<rect x="922.00" y="268.27" width="15.70" height="5.20" stroke="#8e1c1c" stroke-width="1.1" fill="none"/>
<path d="M937.70 270.88 L945.00 270.88" stroke="#b65c5c" stroke-width="1" fill="none"/>
<path d="M891.30 278.55 L914.32 278.55" stroke="#52ad52" stroke-width="1" fill="none"/>
<path d="M914.32 278.55 L922.00 278.55" stroke="#b65c5c" stroke-width="1" fill="none"/>
<rect x="922.00" y="275.95" width="15.70" height="5.20" stroke="#8e1c1c" stroke-width="1.1" fill="none"/>
<path d="M937.70 278.55 L945.00 278.55" stroke="#b65c5c" stroke-width="1" fill="none"/>
<path d="M891.30 286.22 L914.32 286.22" stroke="#52ad52" stroke-width="1" fill="none"/>
<path d="M914.32 286.22 L922.00 286.22" stroke="#b65c5c" stroke-width="1" fill="none"/>
<rect x="922.00" y="283.62" width="15.70" height="5.20" stroke="#8e1c1c" stroke-width="1.1" fill="none"/>
<path d="M937.70 286.22 L945.00 286.22" stroke="#b65c5c" stroke-width="1" fill="none"/>
<path d="M891.30 293.90 L914.32 293.90" stroke="#52ad52" stroke-width="1" fill="none"/>
<path d="M914.32 293.90 L922.00 293.90" stroke="#b65c5c" stroke-width="1" fill="none"/>
<rect x="922.00" y="291.30" width="15.70" height="5.20" stroke="#8e1c1c" stroke-width="1.1" fill="none"/>
<path d="M937.70 293.90 L945.00 293.90" stroke="#b65c5c" stroke-width="1" fill="none"/>
<path d="M891.30 301.57 L914.32 301.57" stroke="#52ad52" stroke-width="1" fill="none"/>
<path d="M914.32 301.57 L922.00 301.57" stroke="#b65c5c" stroke-width="1" fill="none"/>
<rect x="922.00" y="298.97" width="15.70" height="5.20" stroke="#8e1c1c" stroke-width="1.1" fill="none"/>
<path d="M937.70 301.57 L945.00 301.57" stroke="#b65c5c" stroke-width="1" fill="none"/>
<path d="M891.30 309.25 L914.32 309.25" stroke="#52ad52" stroke-width="1" fill="none"/>
<path d="M914.32 309.25 L922.00 309.25" stroke="#b65c5c" stroke-width="1" fill="none"/>
<rect x="922.00" y="306.65" width="15.70" height="5.20" stroke="#8e1c1c" stroke-width="1.1" fill="none"/>
<path d="M937.70 309.25 L945.00 309.25" stroke="#b65c5c" stroke-width="1" fill="none"/>
<text x="918.20" y="258.70" font-size="8" text-anchor="start" fill="#969696">R1</text>
<text x="917.60" y="266.20" font-size="7.5" text-anchor="start" fill="#969696">R</text>
<text x="924.00" y="266.20" font-size="7.5" text-anchor="start" fill="#969696">2</text>
<text x="917.60" y="273.88" font-size="7.5" text-anchor="start" fill="#969696">R</text>
<text x="924.00" y="273.88" font-size="7.5" text-anchor="start" fill="#969696">3</text>
<text x="917.60" y="281.55" font-size="7.5" text-anchor="start" fill="#969696">R</text>
<text x="924.00" y="281.55" font-size="7.5" text-anchor="start" fill="#969696">4</text>
<text x="917.60" y="289.22" font-size="7.5" text-anchor="start" fill="#969696">R</text>
<text x="924.00" y="289.22" font-size="7.5" text-anchor="start" fill="#969696">5</text>
<text x="917.60" y="296.90" font-size="7.5" text-anchor="start" fill="#969696">R</text>
<text x="924.00" y="296.90" font-size="7.5" text-anchor="start" fill="#969696">6</text>
<text x="917.60" y="304.57" font-size="7.5" text-anchor="start" fill="#969696">R</text>
<text x="924.00" y="304.57" font-size="7.5" text-anchor="start" fill="#969696">7</text>
<path d="M1014.60 263.20 L1021.00 263.20" stroke="#b65c5c" stroke-width="1" fill="none"/>
<rect x="1021" y="261.90" width="9" height="2.6" fill="#7d0000"/>
<text x="1033.00" y="266.20" font-size="7.4" text-anchor="start" fill="#969696">X1-9</text>
<path d="M1014.60 270.88 L1021.00 270.88" stroke="#b65c5c" stroke-width="1" fill="none"/>
<rect x="1021" y="269.57" width="9" height="2.6" fill="#7d0000"/>
<text x="1033.00" y="273.88" font-size="7.4" text-anchor="start" fill="#969696">X1-10</text>
<path d="M1014.60 278.55 L1021.00 278.55" stroke="#b65c5c" stroke-width="1" fill="none"/>
<rect x="1021" y="277.25" width="9" height="2.6" fill="#7d0000"/>
<text x="1033.00" y="281.55" font-size="7.4" text-anchor="start" fill="#969696">X1-8</text>
<path d="M1014.60 286.22 L1021.00 286.22" stroke="#b65c5c" stroke-width="1" fill="none"/>
<rect x="1021" y="284.92" width="9" height="2.6" fill="#7d0000"/>
<text x="1033.00" y="289.22" font-size="7.4" text-anchor="start" fill="#969696">X1-7</text>
<path d="M1014.60 293.90 L1021.00 293.90" stroke="#b65c5c" stroke-width="1" fill="none"/>
<rect x="1021" y="292.60" width="9" height="2.6" fill="#7d0000"/>
<text x="1033.00" y="296.90" font-size="7.4" text-anchor="start" fill="#969696">X1-6</text>
<path d="M1014.60 301.57 L1021.00 301.57" stroke="#b65c5c" stroke-width="1" fill="none"/>
<rect x="1021" y="300.27" width="9" height="2.6" fill="#7d0000"/>
<text x="1033.00" y="304.57" font-size="7.4" text-anchor="start" fill="#969696">X1-5</text>
<path d="M1014.60 309.25 L1021.00 309.25" stroke="#b65c5c" stroke-width="1" fill="none"/>
<rect x="1021" y="307.95" width="9" height="2.6" fill="#7d0000"/>
<text x="1033.00" y="312.25" font-size="7.4" text-anchor="start" fill="#969696">X1-4</text>
<path d="M1014.60 316.93 L1021.00 316.93" stroke="#b65c5c" stroke-width="1" fill="none"/>
<rect x="1021" y="315.62" width="9" height="2.6" fill="#7d0000"/>
<text x="1033.00" y="319.93" font-size="7.4" text-anchor="start" fill="#969696">X1-3</text>
<path d="M1014.60 324.60 L1021.00 324.60" stroke="#b65c5c" stroke-width="1" fill="none"/>
<rect x="1021" y="323.30" width="9" height="2.6" fill="#7d0000"/>
<text x="1033.00" y="327.60" font-size="7.4" text-anchor="start" fill="#969696">X1-2</text>
<path d="M1014.60 332.27 L1021.00 332.27" stroke="#b65c5c" stroke-width="1" fill="none"/>
<rect x="1021" y="330.97" width="9" height="2.6" fill="#7d0000"/>
<text x="1033.00" y="335.27" font-size="7.4" text-anchor="start" fill="#969696">X1-1</text>
<path d="M945.00 263.20 L1014.60 263.20" stroke="#52ad52" stroke-width="1" fill="none"/>
<path d="M945.00 270.88 L1014.60 270.88" stroke="#52ad52" stroke-width="1" fill="none"/>
<path d="M945.00 278.55 L1014.60 278.55" stroke="#52ad52" stroke-width="1" fill="none"/>
<path d="M945.00 286.22 L999.20 286.22 L999.20 293.90 L1014.60 293.90" stroke="#52ad52" stroke-width="1" fill="none"/>
<path d="M945.00 293.90 L991.50 293.90 L991.50 309.25 L1014.60 309.25" stroke="#52ad52" stroke-width="1" fill="none"/>
<path d="M945.00 301.57 L983.60 301.57 L983.60 324.60 L1014.60 324.60" stroke="#52ad52" stroke-width="1" fill="none"/>
<path d="M945.00 309.25 L976.00 309.25 L976.00 332.27 L1014.60 332.27" stroke="#52ad52" stroke-width="1" fill="none"/>
<circle cx="1006.50" cy="236.34" r="4.10" stroke="#a33030" stroke-width="1.2" fill="none"/>
<path d="M1006.50 240.44 L1006.50 247.64" stroke="#b65c5c" stroke-width="1" fill="none"/>
<path d="M1006.50 247.64 L1006.50 316.93 L1014.60 316.93" stroke="#52ad52" stroke-width="1" fill="none"/>
<path d="M1006.50 286.22 L1014.60 286.22" stroke="#52ad52" stroke-width="1" fill="none"/>
<path d="M1006.50 301.57 L1014.60 301.57" stroke="#52ad52" stroke-width="1" fill="none"/>
<rect x="477.20" y="409.02" width="61.40" height="84.42" stroke="#8e1c1c" stroke-width="1.5" fill="none"/>
<text x="477.20" y="407.52" font-size="7.8" text-anchor="start" fill="#969696">IC2</text>
<text x="477.20" y="501.45" font-size="7.6" text-anchor="start" fill="#969696">40193N</text>
<path d="M461.85 416.70 L477.20 416.70" stroke="#b65c5c" stroke-width="1" fill="none"/>
<text x="484.20" y="419.30" font-size="6.9" text-anchor="start" fill="#969696">A</text>
<text x="467.60" y="415.30" font-size="6.4" text-anchor="middle" fill="#969696">15</text>
<path d="M461.85 424.38 L477.20 424.38" stroke="#b65c5c" stroke-width="1" fill="none"/>
<text x="484.20" y="426.98" font-size="6.9" text-anchor="start" fill="#969696">B</text>
<text x="467.60" y="422.98" font-size="6.4" text-anchor="middle" fill="#969696">1</text>
<path d="M461.85 432.05 L477.20 432.05" stroke="#b65c5c" stroke-width="1" fill="none"/>
<text x="484.20" y="434.65" font-size="6.9" text-anchor="start" fill="#969696">C</text>
<text x="467.60" y="430.65" font-size="6.4" text-anchor="middle" fill="#969696">10</text>
<path d="M461.85 439.72 L477.20 439.72" stroke="#b65c5c" stroke-width="1" fill="none"/>
<text x="484.20" y="442.32" font-size="6.9" text-anchor="start" fill="#969696">D</text>
<text x="467.60" y="438.32" font-size="6.4" text-anchor="middle" fill="#969696">9</text>
<path d="M461.85 455.07 L471.70 455.07" stroke="#b65c5c" stroke-width="1" fill="none"/>
<circle cx="474.40" cy="455.07" r="2.70" stroke="#8e1c1c" stroke-width="1.1" fill="none"/>
<text x="484.20" y="457.68" font-size="6.9" text-anchor="start" fill="#969696">LOAD</text>
<text x="467.60" y="453.68" font-size="6.4" text-anchor="middle" fill="#969696">11</text>
<path d="M461.85 470.43 L477.20 470.43" stroke="#b65c5c" stroke-width="1" fill="none"/>
<text x="484.20" y="473.03" font-size="6.9" text-anchor="start" fill="#969696">UP</text>
<text x="467.60" y="469.03" font-size="6.4" text-anchor="middle" fill="#969696">5</text>
<path d="M461.85 478.10 L477.20 478.10" stroke="#b65c5c" stroke-width="1" fill="none"/>
<text x="484.20" y="480.70" font-size="6.9" text-anchor="start" fill="#969696">DOWN</text>
<text x="467.60" y="476.70" font-size="6.4" text-anchor="middle" fill="#969696">4</text>
<path d="M461.85 485.77 L477.20 485.77" stroke="#b65c5c" stroke-width="1" fill="none"/>
<text x="484.20" y="488.38" font-size="6.9" text-anchor="start" fill="#969696">CLEAR</text>
<text x="467.60" y="484.38" font-size="6.4" text-anchor="middle" fill="#969696">14</text>
<path d="M538.60 416.70 L553.95 416.70" stroke="#b65c5c" stroke-width="1" fill="none"/>
<text x="531.60" y="419.30" font-size="7.2" text-anchor="end" fill="#969696">QA</text>
<text x="548.10" y="415.30" font-size="6.4" text-anchor="middle" fill="#969696">3</text>
<path d="M538.60 424.38 L553.95 424.38" stroke="#b65c5c" stroke-width="1" fill="none"/>
<text x="531.60" y="426.98" font-size="7.2" text-anchor="end" fill="#969696">QB</text>
<text x="548.10" y="422.98" font-size="6.4" text-anchor="middle" fill="#969696">2</text>
<path d="M538.60 432.05 L553.95 432.05" stroke="#b65c5c" stroke-width="1" fill="none"/>
<text x="531.60" y="434.65" font-size="7.2" text-anchor="end" fill="#969696">QC</text>
<text x="548.10" y="430.65" font-size="6.4" text-anchor="middle" fill="#969696">6</text>
<path d="M538.60 439.72 L553.95 439.72" stroke="#b65c5c" stroke-width="1" fill="none"/>
<text x="531.60" y="442.32" font-size="7.2" text-anchor="end" fill="#969696">QD</text>
<text x="548.10" y="438.32" font-size="6.4" text-anchor="middle" fill="#969696">7</text>
<circle cx="541.40" cy="462.75" r="2.70" stroke="#8e1c1c" stroke-width="1.1" fill="none"/>
<path d="M544.10 462.75 L553.95 462.75" stroke="#b65c5c" stroke-width="1" fill="none"/>
<text x="531.60" y="465.35" font-size="7.2" text-anchor="end" fill="#969696">BORROW</text>
<text x="549.10" y="461.15" font-size="6.4" text-anchor="middle" fill="#969696">13</text>
<circle cx="541.40" cy="470.43" r="2.70" stroke="#8e1c1c" stroke-width="1.1" fill="none"/>
<path d="M544.10 470.43 L553.95 470.43" stroke="#b65c5c" stroke-width="1" fill="none"/>
<text x="531.60" y="473.03" font-size="7.2" text-anchor="end" fill="#969696">CARRY</text>
<text x="549.10" y="468.82" font-size="6.4" text-anchor="middle" fill="#969696">12</text>
<rect x="668.75" y="409.02" width="46.05" height="69.08" stroke="#8e1c1c" stroke-width="1.5" fill="none"/>
<text x="668.75" y="407.52" font-size="7.8" text-anchor="start" fill="#969696">IC5</text>
<text x="668.75" y="486.10" font-size="7.6" text-anchor="start" fill="#969696">4511N</text>
<path d="M653.40 416.70 L668.75 416.70" stroke="#b65c5c" stroke-width="1" fill="none"/>
<text x="675.75" y="419.30" font-size="6.9" text-anchor="start" fill="#969696">IA</text>
<text x="659.15" y="415.30" font-size="6.4" text-anchor="middle" fill="#969696">7</text>
<path d="M653.40 424.38 L668.75 424.38" stroke="#b65c5c" stroke-width="1" fill="none"/>
<text x="675.75" y="426.98" font-size="6.9" text-anchor="start" fill="#969696">IB</text>
<text x="659.15" y="422.98" font-size="6.4" text-anchor="middle" fill="#969696">1</text>
<path d="M653.40 432.05 L668.75 432.05" stroke="#b65c5c" stroke-width="1" fill="none"/>
<text x="675.75" y="434.65" font-size="6.9" text-anchor="start" fill="#969696">IC</text>
<text x="659.15" y="430.65" font-size="6.4" text-anchor="middle" fill="#969696">2</text>
<path d="M653.40 439.72 L668.75 439.72" stroke="#b65c5c" stroke-width="1" fill="none"/>
<text x="675.75" y="442.32" font-size="6.9" text-anchor="start" fill="#969696">ID</text>
<text x="659.15" y="438.32" font-size="6.4" text-anchor="middle" fill="#969696">6</text>
<path d="M653.40 455.07 L663.25 455.07" stroke="#b65c5c" stroke-width="1" fill="none"/>
<circle cx="665.95" cy="455.07" r="2.70" stroke="#8e1c1c" stroke-width="1.1" fill="none"/>
<text x="675.75" y="457.68" font-size="6.9" text-anchor="start" fill="#969696">LT</text>
<text x="659.15" y="453.68" font-size="6.4" text-anchor="middle" fill="#969696">3</text>
<path d="M653.40 462.75 L663.25 462.75" stroke="#b65c5c" stroke-width="1" fill="none"/>
<circle cx="665.95" cy="462.75" r="2.70" stroke="#8e1c1c" stroke-width="1.1" fill="none"/>
<text x="675.75" y="465.35" font-size="6.9" text-anchor="start" fill="#969696">BI</text>
<text x="659.15" y="461.35" font-size="6.4" text-anchor="middle" fill="#969696">4</text>
<path d="M653.40 470.43 L668.75 470.43" stroke="#b65c5c" stroke-width="1" fill="none"/>
<text x="675.75" y="473.03" font-size="6.9" text-anchor="start" fill="#969696">LE</text>
<text x="659.15" y="469.03" font-size="6.4" text-anchor="middle" fill="#969696">5</text>
<path d="M714.80 416.70 L730.15 416.70" stroke="#b65c5c" stroke-width="1" fill="none"/>
<text x="707.80" y="419.30" font-size="7.2" text-anchor="end" fill="#969696">A</text>
<text x="725.30" y="415.30" font-size="6.4" text-anchor="middle" fill="#969696">13</text>
<path d="M714.80 424.38 L730.15 424.38" stroke="#b65c5c" stroke-width="1" fill="none"/>
<text x="707.80" y="426.98" font-size="7.2" text-anchor="end" fill="#969696">B</text>
<text x="725.30" y="422.98" font-size="6.4" text-anchor="middle" fill="#969696">12</text>
<path d="M714.80 432.05 L730.15 432.05" stroke="#b65c5c" stroke-width="1" fill="none"/>
<text x="707.80" y="434.65" font-size="7.2" text-anchor="end" fill="#969696">C</text>
<text x="725.30" y="430.65" font-size="6.4" text-anchor="middle" fill="#969696">11</text>
<path d="M714.80 439.72 L730.15 439.72" stroke="#b65c5c" stroke-width="1" fill="none"/>
<text x="707.80" y="442.32" font-size="7.2" text-anchor="end" fill="#969696">D</text>
<text x="725.30" y="438.32" font-size="6.4" text-anchor="middle" fill="#969696">10</text>
<path d="M714.80 447.40 L730.15 447.40" stroke="#b65c5c" stroke-width="1" fill="none"/>
<text x="707.80" y="450.00" font-size="7.2" text-anchor="end" fill="#969696">E</text>
<text x="725.30" y="446.00" font-size="6.4" text-anchor="middle" fill="#969696">9</text>
<path d="M714.80 455.07 L730.15 455.07" stroke="#b65c5c" stroke-width="1" fill="none"/>
<text x="707.80" y="457.68" font-size="7.2" text-anchor="end" fill="#969696">F</text>
<text x="725.30" y="453.68" font-size="6.4" text-anchor="middle" fill="#969696">15</text>
<path d="M714.80 462.75 L730.15 462.75" stroke="#b65c5c" stroke-width="1" fill="none"/>
<text x="707.80" y="465.35" font-size="7.2" text-anchor="end" fill="#969696">G</text>
<text x="725.30" y="461.35" font-size="6.4" text-anchor="middle" fill="#969696">14</text>
<rect x="829.90" y="409.02" width="46.05" height="76.75" stroke="#8e1c1c" stroke-width="1.5" fill="none"/>
<text x="829.90" y="407.52" font-size="7.8" text-anchor="start" fill="#969696">IC8</text>
<text x="829.90" y="493.77" font-size="7.6" text-anchor="start" fill="#969696">ULN2803</text>
<path d="M814.55 416.70 L829.90 416.70" stroke="#b65c5c" stroke-width="1" fill="none"/>
<text x="836.90" y="419.30" font-size="6.9" text-anchor="start" fill="#969696">I1</text>
<text x="820.70" y="415.30" font-size="6.4" text-anchor="middle" fill="#969696">1</text>
<path d="M875.95 416.70 L891.30 416.70" stroke="#b65c5c" stroke-width="1" fill="none"/>
<text x="868.75" y="419.30" font-size="6.9" text-anchor="end" fill="#969696">O1</text>
<text x="886.45" y="415.30" font-size="6.4" text-anchor="middle" fill="#969696">18</text>
<path d="M814.55 424.38 L829.90 424.38" stroke="#b65c5c" stroke-width="1" fill="none"/>
<text x="836.90" y="426.98" font-size="6.9" text-anchor="start" fill="#969696">I2</text>
<text x="820.70" y="422.98" font-size="6.4" text-anchor="middle" fill="#969696">2</text>
<path d="M875.95 424.38 L891.30 424.38" stroke="#b65c5c" stroke-width="1" fill="none"/>
<text x="868.75" y="426.98" font-size="6.9" text-anchor="end" fill="#969696">O2</text>
<text x="886.45" y="422.98" font-size="6.4" text-anchor="middle" fill="#969696">17</text>
<path d="M814.55 432.05 L829.90 432.05" stroke="#b65c5c" stroke-width="1" fill="none"/>
<text x="836.90" y="434.65" font-size="6.9" text-anchor="start" fill="#969696">I3</text>
<text x="820.70" y="430.65" font-size="6.4" text-anchor="middle" fill="#969696">3</text>
<path d="M875.95 432.05 L891.30 432.05" stroke="#b65c5c" stroke-width="1" fill="none"/>
<text x="868.75" y="434.65" font-size="6.9" text-anchor="end" fill="#969696">O3</text>
<text x="886.45" y="430.65" font-size="6.4" text-anchor="middle" fill="#969696">16</text>
<path d="M814.55 439.72 L829.90 439.72" stroke="#b65c5c" stroke-width="1" fill="none"/>
<text x="836.90" y="442.32" font-size="6.9" text-anchor="start" fill="#969696">I4</text>
<text x="820.70" y="438.32" font-size="6.4" text-anchor="middle" fill="#969696">4</text>
<path d="M875.95 439.72 L891.30 439.72" stroke="#b65c5c" stroke-width="1" fill="none"/>
<text x="868.75" y="442.32" font-size="6.9" text-anchor="end" fill="#969696">O4</text>
<text x="886.45" y="438.32" font-size="6.4" text-anchor="middle" fill="#969696">15</text>
<path d="M814.55 447.40 L829.90 447.40" stroke="#b65c5c" stroke-width="1" fill="none"/>
<text x="836.90" y="450.00" font-size="6.9" text-anchor="start" fill="#969696">I5</text>
<text x="820.70" y="446.00" font-size="6.4" text-anchor="middle" fill="#969696">5</text>
<path d="M875.95 447.40 L891.30 447.40" stroke="#b65c5c" stroke-width="1" fill="none"/>
<text x="868.75" y="450.00" font-size="6.9" text-anchor="end" fill="#969696">O5</text>
<text x="886.45" y="446.00" font-size="6.4" text-anchor="middle" fill="#969696">14</text>
<path d="M814.55 455.07 L829.90 455.07" stroke="#b65c5c" stroke-width="1" fill="none"/>
<text x="836.90" y="457.68" font-size="6.9" text-anchor="start" fill="#969696">I6</text>
<text x="820.70" y="453.68" font-size="6.4" text-anchor="middle" fill="#969696">6</text>
<path d="M875.95 455.07 L891.30 455.07" stroke="#b65c5c" stroke-width="1" fill="none"/>
<text x="868.75" y="457.68" font-size="6.9" text-anchor="end" fill="#969696">O6</text>
<text x="886.45" y="453.68" font-size="6.4" text-anchor="middle" fill="#969696">13</text>
<path d="M814.55 462.75 L829.90 462.75" stroke="#b65c5c" stroke-width="1" fill="none"/>
<text x="836.90" y="465.35" font-size="6.9" text-anchor="start" fill="#969696">I7</text>
<text x="820.70" y="461.35" font-size="6.4" text-anchor="middle" fill="#969696">7</text>
<path d="M875.95 462.75 L891.30 462.75" stroke="#b65c5c" stroke-width="1" fill="none"/>
<text x="868.75" y="465.35" font-size="6.9" text-anchor="end" fill="#969696">O7</text>
<text x="886.45" y="461.35" font-size="6.4" text-anchor="middle" fill="#969696">12</text>
<path d="M814.55 470.43 L829.90 470.43" stroke="#b65c5c" stroke-width="1" fill="none"/>
<text x="836.90" y="473.03" font-size="6.9" text-anchor="start" fill="#969696">I8</text>
<text x="820.70" y="469.03" font-size="6.4" text-anchor="middle" fill="#969696">8</text>
<path d="M875.95 470.43 L891.30 470.43" stroke="#b65c5c" stroke-width="1" fill="none"/>
<text x="868.75" y="473.03" font-size="6.9" text-anchor="end" fill="#969696">O8</text>
<text x="886.45" y="469.03" font-size="6.4" text-anchor="middle" fill="#969696">11</text>
<path d="M814.55 478.10 L829.90 478.10" stroke="#b65c5c" stroke-width="1" fill="none"/>
<text x="836.90" y="480.70" font-size="6.9" text-anchor="start" fill="#969696">GND</text>
<text x="820.70" y="476.70" font-size="6.4" text-anchor="middle" fill="#969696">9</text>
<path d="M875.95 478.10 L891.30 478.10" stroke="#b65c5c" stroke-width="1" fill="none"/>
<text x="868.75" y="480.70" font-size="6.9" text-anchor="end" fill="#969696">CD+</text>
<text x="886.45" y="476.70" font-size="6.4" text-anchor="middle" fill="#969696">10</text>
<path d="M454.18 416.70 L454.18 439.72" stroke="#52ad52" stroke-width="1" fill="none"/>
<path d="M454.18 416.70 L461.85 416.70" stroke="#52ad52" stroke-width="1" fill="none"/>
<path d="M454.18 424.38 L461.85 424.38" stroke="#52ad52" stroke-width="1" fill="none"/>
<path d="M454.18 432.05 L461.85 432.05" stroke="#52ad52" stroke-width="1" fill="none"/>
<path d="M454.18 439.72 L461.85 439.72" stroke="#52ad52" stroke-width="1" fill="none"/>
<circle cx="435.20" cy="432.05" r="3.90" stroke="#a33030" stroke-width="1.2" fill="none"/>
<path d="M439.10 432.05 L446.70 432.05" stroke="#b65c5c" stroke-width="1" fill="none"/>
<path d="M446.70 432.05 L454.18 432.05" stroke="#52ad52" stroke-width="1" fill="none"/>
<text x="430.40" y="434.85" font-size="7.5" text-anchor="middle" fill="#969696" transform="rotate(-90 430.40 434.85)">VSS</text>
<circle cx="435.20" cy="455.07" r="3.90" stroke="#a33030" stroke-width="1.2" fill="none"/>
<path d="M439.10 455.07 L446.70 455.07" stroke="#b65c5c" stroke-width="1" fill="none"/>
<path d="M446.70 455.07 L461.85 455.07" stroke="#52ad52" stroke-width="1" fill="none"/>
<text x="430.40" y="452.77" font-size="7.5" text-anchor="middle" fill="#969696" transform="rotate(-90 430.40 452.77)">VDD</text>
<path d="M553.95 416.70 L653.40 416.70" stroke="#52ad52" stroke-width="1" fill="none"/>
<path d="M553.95 424.38 L653.40 424.38" stroke="#52ad52" stroke-width="1" fill="none"/>
<path d="M553.95 432.05 L653.40 432.05" stroke="#52ad52" stroke-width="1" fill="none"/>
<path d="M553.95 439.72 L653.40 439.72" stroke="#52ad52" stroke-width="1" fill="none"/>
<circle cx="626.80" cy="455.07" r="3.90" stroke="#a33030" stroke-width="1.2" fill="none"/>
<path d="M630.70 455.07 L638.40 455.07" stroke="#b65c5c" stroke-width="1" fill="none"/>
<path d="M638.40 455.07 L653.40 455.07" stroke="#52ad52" stroke-width="1" fill="none"/>
<text x="631.30" y="447.57" font-size="7.5" text-anchor="middle" fill="#969696">VDD</text>
<path d="M653.40 470.43 L646.20 470.43 L646.20 478.93" stroke="#52ad52" stroke-width="1" fill="none"/>
<path d="M646.20 478.93 L646.20 485.43" stroke="#b65c5c" stroke-width="1" fill="none"/>
<circle cx="646.20" cy="489.32" r="3.90" stroke="#a33030" stroke-width="1.2" fill="none"/>
<text x="648.00" y="500.43" font-size="7.5" text-anchor="middle" fill="#969696">VSS</text>
<path d="M730.15 416.70 L783.88 416.70 L783.88 432.05 L814.55 432.05" stroke="#52ad52" stroke-width="1" fill="none"/>
<path d="M730.15 424.38 L776.20 424.38 L776.20 439.72 L814.55 439.72" stroke="#52ad52" stroke-width="1" fill="none"/>
<path d="M730.15 432.05 L768.52 432.05 L768.52 447.40 L814.55 447.40" stroke="#52ad52" stroke-width="1" fill="none"/>
<path d="M730.15 439.72 L760.85 439.72 L760.85 455.07 L814.55 455.07" stroke="#52ad52" stroke-width="1" fill="none"/>
<path d="M730.15 447.40 L753.17 447.40 L753.17 462.75 L814.55 462.75" stroke="#52ad52" stroke-width="1" fill="none"/>
<path d="M730.15 455.07 L737.82 455.07 L737.82 401.35 L799.23 401.35 L799.23 416.70 L814.55 416.70" stroke="#52ad52" stroke-width="1" fill="none"/>
<path d="M730.15 462.75 L745.50 462.75 L745.50 409.02 L791.55 409.02 L791.55 424.38 L814.55 424.38" stroke="#52ad52" stroke-width="1" fill="none"/>
<path d="M814.55 470.43 L784.10 470.43 L784.10 482.10" stroke="#52ad52" stroke-width="1" fill="none"/>
<path d="M784.10 478.10 L814.55 478.10" stroke="#52ad52" stroke-width="1" fill="none"/>
<path d="M784.10 482.10 L784.10 492.70" stroke="#b65c5c" stroke-width="1" fill="none"/>
<circle cx="784.10" cy="496.70" r="3.90" stroke="#a33030" stroke-width="1.2" fill="none"/>
<text x="786.10" y="507.60" font-size="7.5" text-anchor="middle" fill="#969696">VSS</text>
<path d="M891.30 478.10 L910.12 478.10" stroke="#52ad52" stroke-width="1" fill="none"/>
<path d="M910.12 478.10 L914.50 478.10" stroke="#b65c5c" stroke-width="1" fill="none"/>
<circle cx="918.40" cy="478.10" r="3.90" stroke="#a33030" stroke-width="1.2" fill="none"/>
<text x="915.50" y="490.60" font-size="7.5" text-anchor="middle" fill="#969696">VDD</text>
<path d="M891.30 416.70 L914.32 416.70" stroke="#52ad52" stroke-width="1" fill="none"/>
<path d="M914.32 416.70 L922.00 416.70" stroke="#b65c5c" stroke-width="1" fill="none"/>
<rect x="922.00" y="414.10" width="15.70" height="5.20" stroke="#8e1c1c" stroke-width="1.1" fill="none"/>
<path d="M937.70 416.70 L945.00 416.70" stroke="#b65c5c" stroke-width="1" fill="none"/>
<path d="M891.30 424.38 L914.32 424.38" stroke="#52ad52" stroke-width="1" fill="none"/>
<path d="M914.32 424.38 L922.00 424.38" stroke="#b65c5c" stroke-width="1" fill="none"/>
<rect x="922.00" y="421.77" width="15.70" height="5.20" stroke="#8e1c1c" stroke-width="1.1" fill="none"/>
<path d="M937.70 424.38 L945.00 424.38" stroke="#b65c5c" stroke-width="1" fill="none"/>
<path d="M891.30 432.05 L914.32 432.05" stroke="#52ad52" stroke-width="1" fill="none"/>
<path d="M914.32 432.05 L922.00 432.05" stroke="#b65c5c" stroke-width="1" fill="none"/>
<rect x="922.00" y="429.45" width="15.70" height="5.20" stroke="#8e1c1c" stroke-width="1.1" fill="none"/>
<path d="M937.70 432.05 L945.00 432.05" stroke="#b65c5c" stroke-width="1" fill="none"/>
<path d="M891.30 439.72 L914.32 439.72" stroke="#52ad52" stroke-width="1" fill="none"/>
<path d="M914.32 439.72 L922.00 439.72" stroke="#b65c5c" stroke-width="1" fill="none"/>
<rect x="922.00" y="437.12" width="15.70" height="5.20" stroke="#8e1c1c" stroke-width="1.1" fill="none"/>
<path d="M937.70 439.72 L945.00 439.72" stroke="#b65c5c" stroke-width="1" fill="none"/>
<path d="M891.30 447.40 L914.32 447.40" stroke="#52ad52" stroke-width="1" fill="none"/>
<path d="M914.32 447.40 L922.00 447.40" stroke="#b65c5c" stroke-width="1" fill="none"/>
<rect x="922.00" y="444.80" width="15.70" height="5.20" stroke="#8e1c1c" stroke-width="1.1" fill="none"/>
<path d="M937.70 447.40 L945.00 447.40" stroke="#b65c5c" stroke-width="1" fill="none"/>
<path d="M891.30 455.07 L914.32 455.07" stroke="#52ad52" stroke-width="1" fill="none"/>
<path d="M914.32 455.07 L922.00 455.07" stroke="#b65c5c" stroke-width="1" fill="none"/>
<rect x="922.00" y="452.47" width="15.70" height="5.20" stroke="#8e1c1c" stroke-width="1.1" fill="none"/>
<path d="M937.70 455.07 L945.00 455.07" stroke="#b65c5c" stroke-width="1" fill="none"/>
<path d="M891.30 462.75 L914.32 462.75" stroke="#52ad52" stroke-width="1" fill="none"/>
<path d="M914.32 462.75 L922.00 462.75" stroke="#b65c5c" stroke-width="1" fill="none"/>
<rect x="922.00" y="460.15" width="15.70" height="5.20" stroke="#8e1c1c" stroke-width="1.1" fill="none"/>
<path d="M937.70 462.75 L945.00 462.75" stroke="#b65c5c" stroke-width="1" fill="none"/>
<text x="918.20" y="412.20" font-size="8" text-anchor="start" fill="#969696">R8</text>
<text x="917.60" y="419.70" font-size="7.5" text-anchor="start" fill="#969696">R</text>
<text x="924.00" y="419.70" font-size="7.5" text-anchor="start" fill="#969696">9</text>
<text x="917.60" y="427.38" font-size="7.5" text-anchor="start" fill="#969696">R</text>
<text x="921.50" y="427.38" font-size="7.5" text-anchor="start" fill="#969696">10</text>
<text x="917.60" y="435.05" font-size="7.5" text-anchor="start" fill="#969696">R</text>
<text x="921.50" y="435.05" font-size="7.5" text-anchor="start" fill="#969696">11</text>
<text x="917.60" y="442.72" font-size="7.5" text-anchor="start" fill="#969696">R</text>
<text x="921.50" y="442.72" font-size="7.5" text-anchor="start" fill="#969696">12</text>
<text x="917.60" y="450.40" font-size="7.5" text-anchor="start" fill="#969696">R</text>
<text x="921.50" y="450.40" font-size="7.5" text-anchor="start" fill="#969696">13</text>
<text x="917.60" y="458.07" font-size="7.5" text-anchor="start" fill="#969696">R</text>
<text x="921.50" y="458.07" font-size="7.5" text-anchor="start" fill="#969696">14</text>
<path d="M1014.60 416.70 L1021.00 416.70" stroke="#b65c5c" stroke-width="1" fill="none"/>
<rect x="1021" y="415.40" width="9" height="2.6" fill="#7d0000"/>
<text x="1033.00" y="419.70" font-size="7.4" text-anchor="start" fill="#969696">X2-9</text>
<path d="M1014.60 424.38 L1021.00 424.38" stroke="#b65c5c" stroke-width="1" fill="none"/>
<rect x="1021" y="423.07" width="9" height="2.6" fill="#7d0000"/>
<text x="1033.00" y="427.38" font-size="7.4" text-anchor="start" fill="#969696">X2-10</text>
<path d="M1014.60 432.05 L1021.00 432.05" stroke="#b65c5c" stroke-width="1" fill="none"/>
<rect x="1021" y="430.75" width="9" height="2.6" fill="#7d0000"/>
<text x="1033.00" y="435.05" font-size="7.4" text-anchor="start" fill="#969696">X2-8</text>
<path d="M1014.60 439.72 L1021.00 439.72" stroke="#b65c5c" stroke-width="1" fill="none"/>
<rect x="1021" y="438.42" width="9" height="2.6" fill="#7d0000"/>
<text x="1033.00" y="442.72" font-size="7.4" text-anchor="start" fill="#969696">X2-7</text>
<path d="M1014.60 447.40 L1021.00 447.40" stroke="#b65c5c" stroke-width="1" fill="none"/>
<rect x="1021" y="446.10" width="9" height="2.6" fill="#7d0000"/>
<text x="1033.00" y="450.40" font-size="7.4" text-anchor="start" fill="#969696">X2-6</text>
<path d="M1014.60 455.07 L1021.00 455.07" stroke="#b65c5c" stroke-width="1" fill="none"/>
<rect x="1021" y="453.77" width="9" height="2.6" fill="#7d0000"/>
<text x="1033.00" y="458.07" font-size="7.4" text-anchor="start" fill="#969696">X2-5</text>
<path d="M1014.60 462.75 L1021.00 462.75" stroke="#b65c5c" stroke-width="1" fill="none"/>
<rect x="1021" y="461.45" width="9" height="2.6" fill="#7d0000"/>
<text x="1033.00" y="465.75" font-size="7.4" text-anchor="start" fill="#969696">X2-4</text>
<path d="M1014.60 470.43 L1021.00 470.43" stroke="#b65c5c" stroke-width="1" fill="none"/>
<rect x="1021" y="469.12" width="9" height="2.6" fill="#7d0000"/>
<text x="1033.00" y="473.43" font-size="7.4" text-anchor="start" fill="#969696">X2-3</text>
<path d="M1014.60 478.10 L1021.00 478.10" stroke="#b65c5c" stroke-width="1" fill="none"/>
<rect x="1021" y="476.80" width="9" height="2.6" fill="#7d0000"/>
<text x="1033.00" y="481.10" font-size="7.4" text-anchor="start" fill="#969696">X2-2</text>
<path d="M1014.60 485.77 L1021.00 485.77" stroke="#b65c5c" stroke-width="1" fill="none"/>
<rect x="1021" y="484.47" width="9" height="2.6" fill="#7d0000"/>
<text x="1033.00" y="488.77" font-size="7.4" text-anchor="start" fill="#969696">X2-1</text>
<path d="M945.00 416.70 L1014.60 416.70" stroke="#52ad52" stroke-width="1" fill="none"/>
<path d="M945.00 424.38 L1014.60 424.38" stroke="#52ad52" stroke-width="1" fill="none"/>
<path d="M945.00 432.05 L1014.60 432.05" stroke="#52ad52" stroke-width="1" fill="none"/>
<path d="M945.00 439.72 L999.20 439.72 L999.20 447.40 L1014.60 447.40" stroke="#52ad52" stroke-width="1" fill="none"/>
<path d="M945.00 447.40 L991.50 447.40 L991.50 462.75 L1014.60 462.75" stroke="#52ad52" stroke-width="1" fill="none"/>
<path d="M945.00 455.07 L983.60 455.07 L983.60 478.10 L1014.60 478.10" stroke="#52ad52" stroke-width="1" fill="none"/>
<path d="M945.00 462.75 L976.00 462.75 L976.00 485.77 L1014.60 485.77" stroke="#52ad52" stroke-width="1" fill="none"/>
<circle cx="1006.50" cy="389.84" r="4.10" stroke="#a33030" stroke-width="1.2" fill="none"/>
<path d="M1006.50 393.94 L1006.50 401.14" stroke="#b65c5c" stroke-width="1" fill="none"/>
<path d="M1006.50 401.14 L1006.50 470.43 L1014.60 470.43" stroke="#52ad52" stroke-width="1" fill="none"/>
<path d="M1006.50 439.72 L1014.60 439.72" stroke="#52ad52" stroke-width="1" fill="none"/>
<path d="M1006.50 455.07 L1014.60 455.07" stroke="#52ad52" stroke-width="1" fill="none"/>
<text x="1019.00" y="393.24" font-size="7.5" text-anchor="middle" fill="#969696" transform="rotate(-90 1019.00 393.24)">VDD</text>
<rect x="477.20" y="554.73" width="61.40" height="84.42" stroke="#8e1c1c" stroke-width="1.5" fill="none"/>
<text x="477.20" y="553.23" font-size="7.8" text-anchor="start" fill="#969696">IC3</text>
<text x="477.20" y="647.15" font-size="7.6" text-anchor="start" fill="#969696">40193N</text>
<path d="M461.85 562.40 L477.20 562.40" stroke="#b65c5c" stroke-width="1" fill="none"/>
<text x="484.20" y="565.00" font-size="6.9" text-anchor="start" fill="#969696">A</text>
<text x="467.60" y="561.00" font-size="6.4" text-anchor="middle" fill="#969696">15</text>
<path d="M461.85 570.07 L477.20 570.07" stroke="#b65c5c" stroke-width="1" fill="none"/>
<text x="484.20" y="572.67" font-size="6.9" text-anchor="start" fill="#969696">B</text>
<text x="467.60" y="568.67" font-size="6.4" text-anchor="middle" fill="#969696">1</text>
<path d="M461.85 577.75 L477.20 577.75" stroke="#b65c5c" stroke-width="1" fill="none"/>
<text x="484.20" y="580.35" font-size="6.9" text-anchor="start" fill="#969696">C</text>
<text x="467.60" y="576.35" font-size="6.4" text-anchor="middle" fill="#969696">10</text>
<path d="M461.85 585.42 L477.20 585.42" stroke="#b65c5c" stroke-width="1" fill="none"/>
<text x="484.20" y="588.02" font-size="6.9" text-anchor="start" fill="#969696">D</text>
<text x="467.60" y="584.02" font-size="6.4" text-anchor="middle" fill="#969696">9</text>
<path d="M461.85 600.77 L471.70 600.77" stroke="#b65c5c" stroke-width="1" fill="none"/>
<circle cx="474.40" cy="600.77" r="2.70" stroke="#8e1c1c" stroke-width="1.1" fill="none"/>
<text x="484.20" y="603.38" font-size="6.9" text-anchor="start" fill="#969696">LOAD</text>
<text x="467.60" y="599.38" font-size="6.4" text-anchor="middle" fill="#969696">11</text>
<path d="M461.85 616.12 L477.20 616.12" stroke="#b65c5c" stroke-width="1" fill="none"/>
<text x="484.20" y="618.73" font-size="6.9" text-anchor="start" fill="#969696">UP</text>
<text x="467.60" y="614.73" font-size="6.4" text-anchor="middle" fill="#969696">5</text>
<path d="M461.85 623.80 L477.20 623.80" stroke="#b65c5c" stroke-width="1" fill="none"/>
<text x="484.20" y="626.40" font-size="6.9" text-anchor="start" fill="#969696">DOWN</text>
<text x="467.60" y="622.40" font-size="6.4" text-anchor="middle" fill="#969696">4</text>
<path d="M461.85 631.48 L477.20 631.48" stroke="#b65c5c" stroke-width="1" fill="none"/>
<text x="484.20" y="634.08" font-size="6.9" text-anchor="start" fill="#969696">CLEAR</text>
<text x="467.60" y="630.08" font-size="6.4" text-anchor="middle" fill="#969696">14</text>
<path d="M538.60 562.40 L553.95 562.40" stroke="#b65c5c" stroke-width="1" fill="none"/>
<text x="531.60" y="565.00" font-size="7.2" text-anchor="end" fill="#969696">QA</text>
<text x="548.10" y="561.00" font-size="6.4" text-anchor="middle" fill="#969696">3</text>
<path d="M538.60 570.07 L553.95 570.07" stroke="#b65c5c" stroke-width="1" fill="none"/>
<text x="531.60" y="572.67" font-size="7.2" text-anchor="end" fill="#969696">QB</text>
<text x="548.10" y="568.67" font-size="6.4" text-anchor="middle" fill="#969696">2</text>
<path d="M538.60 577.75 L553.95 577.75" stroke="#b65c5c" stroke-width="1" fill="none"/>
<text x="531.60" y="580.35" font-size="7.2" text-anchor="end" fill="#969696">QC</text>
<text x="548.10" y="576.35" font-size="6.4" text-anchor="middle" fill="#969696">6</text>
<path d="M538.60 585.42 L553.95 585.42" stroke="#b65c5c" stroke-width="1" fill="none"/>
<text x="531.60" y="588.02" font-size="7.2" text-anchor="end" fill="#969696">QD</text>
<text x="548.10" y="584.02" font-size="6.4" text-anchor="middle" fill="#969696">7</text>
<circle cx="541.40" cy="608.45" r="2.70" stroke="#8e1c1c" stroke-width="1.1" fill="none"/>
<path d="M544.10 608.45 L553.95 608.45" stroke="#b65c5c" stroke-width="1" fill="none"/>
<text x="531.60" y="611.05" font-size="7.2" text-anchor="end" fill="#969696">BORROW</text>
<text x="549.10" y="606.85" font-size="6.4" text-anchor="middle" fill="#969696">13</text>
<circle cx="541.40" cy="616.12" r="2.70" stroke="#8e1c1c" stroke-width="1.1" fill="none"/>
<path d="M544.10 616.12 L553.95 616.12" stroke="#b65c5c" stroke-width="1" fill="none"/>
<text x="531.60" y="618.73" font-size="7.2" text-anchor="end" fill="#969696">CARRY</text>
<text x="549.10" y="614.52" font-size="6.4" text-anchor="middle" fill="#969696">12</text>
<rect x="668.75" y="554.73" width="46.05" height="69.08" stroke="#8e1c1c" stroke-width="1.5" fill="none"/>
<text x="668.75" y="553.23" font-size="7.8" text-anchor="start" fill="#969696">IC6</text>
<text x="668.75" y="631.80" font-size="7.6" text-anchor="start" fill="#969696">4511N</text>
<path d="M653.40 562.40 L668.75 562.40" stroke="#b65c5c" stroke-width="1" fill="none"/>
<text x="675.75" y="565.00" font-size="6.9" text-anchor="start" fill="#969696">IA</text>
<text x="659.15" y="561.00" font-size="6.4" text-anchor="middle" fill="#969696">7</text>
<path d="M653.40 570.07 L668.75 570.07" stroke="#b65c5c" stroke-width="1" fill="none"/>
<text x="675.75" y="572.67" font-size="6.9" text-anchor="start" fill="#969696">IB</text>
<text x="659.15" y="568.67" font-size="6.4" text-anchor="middle" fill="#969696">1</text>
<path d="M653.40 577.75 L668.75 577.75" stroke="#b65c5c" stroke-width="1" fill="none"/>
<text x="675.75" y="580.35" font-size="6.9" text-anchor="start" fill="#969696">IC</text>
<text x="659.15" y="576.35" font-size="6.4" text-anchor="middle" fill="#969696">2</text>
<path d="M653.40 585.42 L668.75 585.42" stroke="#b65c5c" stroke-width="1" fill="none"/>
<text x="675.75" y="588.02" font-size="6.9" text-anchor="start" fill="#969696">ID</text>
<text x="659.15" y="584.02" font-size="6.4" text-anchor="middle" fill="#969696">6</text>
<path d="M653.40 600.77 L663.25 600.77" stroke="#b65c5c" stroke-width="1" fill="none"/>
<circle cx="665.95" cy="600.77" r="2.70" stroke="#8e1c1c" stroke-width="1.1" fill="none"/>
<text x="675.75" y="603.38" font-size="6.9" text-anchor="start" fill="#969696">LT</text>
<text x="659.15" y="599.38" font-size="6.4" text-anchor="middle" fill="#969696">3</text>
<path d="M653.40 608.45 L663.25 608.45" stroke="#b65c5c" stroke-width="1" fill="none"/>
<circle cx="665.95" cy="608.45" r="2.70" stroke="#8e1c1c" stroke-width="1.1" fill="none"/>
<text x="675.75" y="611.05" font-size="6.9" text-anchor="start" fill="#969696">BI</text>
<text x="659.15" y="607.05" font-size="6.4" text-anchor="middle" fill="#969696">4</text>
<path d="M653.40 616.12 L668.75 616.12" stroke="#b65c5c" stroke-width="1" fill="none"/>
<text x="675.75" y="618.73" font-size="6.9" text-anchor="start" fill="#969696">LE</text>
<text x="659.15" y="614.73" font-size="6.4" text-anchor="middle" fill="#969696">5</text>
<path d="M714.80 562.40 L730.15 562.40" stroke="#b65c5c" stroke-width="1" fill="none"/>
<text x="707.80" y="565.00" font-size="7.2" text-anchor="end" fill="#969696">A</text>
<text x="725.30" y="561.00" font-size="6.4" text-anchor="middle" fill="#969696">13</text>
<path d="M714.80 570.07 L730.15 570.07" stroke="#b65c5c" stroke-width="1" fill="none"/>
<text x="707.80" y="572.67" font-size="7.2" text-anchor="end" fill="#969696">B</text>
<text x="725.30" y="568.67" font-size="6.4" text-anchor="middle" fill="#969696">12</text>
<path d="M714.80 577.75 L730.15 577.75" stroke="#b65c5c" stroke-width="1" fill="none"/>
<text x="707.80" y="580.35" font-size="7.2" text-anchor="end" fill="#969696">C</text>
<text x="725.30" y="576.35" font-size="6.4" text-anchor="middle" fill="#969696">11</text>
<path d="M714.80 585.42 L730.15 585.42" stroke="#b65c5c" stroke-width="1" fill="none"/>
<text x="707.80" y="588.02" font-size="7.2" text-anchor="end" fill="#969696">D</text>
<text x="725.30" y="584.02" font-size="6.4" text-anchor="middle" fill="#969696">10</text>
<path d="M714.80 593.10 L730.15 593.10" stroke="#b65c5c" stroke-width="1" fill="none"/>
<text x="707.80" y="595.70" font-size="7.2" text-anchor="end" fill="#969696">E</text>
<text x="725.30" y="591.70" font-size="6.4" text-anchor="middle" fill="#969696">9</text>
<path d="M714.80 600.77 L730.15 600.77" stroke="#b65c5c" stroke-width="1" fill="none"/>
<text x="707.80" y="603.38" font-size="7.2" text-anchor="end" fill="#969696">F</text>
<text x="725.30" y="599.38" font-size="6.4" text-anchor="middle" fill="#969696">15</text>
<path d="M714.80 608.45 L730.15 608.45" stroke="#b65c5c" stroke-width="1" fill="none"/>
<text x="707.80" y="611.05" font-size="7.2" text-anchor="end" fill="#969696">G</text>
<text x="725.30" y="607.05" font-size="6.4" text-anchor="middle" fill="#969696">14</text>
<rect x="829.90" y="554.73" width="46.05" height="76.75" stroke="#8e1c1c" stroke-width="1.5" fill="none"/>
<text x="829.90" y="553.23" font-size="7.8" text-anchor="start" fill="#969696">IC9</text>
<text x="829.90" y="639.48" font-size="7.6" text-anchor="start" fill="#969696">ULN2803</text>
<path d="M814.55 562.40 L829.90 562.40" stroke="#b65c5c" stroke-width="1" fill="none"/>
<text x="836.90" y="565.00" font-size="6.9" text-anchor="start" fill="#969696">I1</text>
<text x="820.70" y="561.00" font-size="6.4" text-anchor="middle" fill="#969696">1</text>
<path d="M875.95 562.40 L891.30 562.40" stroke="#b65c5c" stroke-width="1" fill="none"/>
<text x="868.75" y="565.00" font-size="6.9" text-anchor="end" fill="#969696">O1</text>
<text x="886.45" y="561.00" font-size="6.4" text-anchor="middle" fill="#969696">18</text>
<path d="M814.55 570.07 L829.90 570.07" stroke="#b65c5c" stroke-width="1" fill="none"/>
<text x="836.90" y="572.67" font-size="6.9" text-anchor="start" fill="#969696">I2</text>
<text x="820.70" y="568.67" font-size="6.4" text-anchor="middle" fill="#969696">2</text>
<path d="M875.95 570.07 L891.30 570.07" stroke="#b65c5c" stroke-width="1" fill="none"/>
<text x="868.75" y="572.67" font-size="6.9" text-anchor="end" fill="#969696">O2</text>
<text x="886.45" y="568.67" font-size="6.4" text-anchor="middle" fill="#969696">17</text>
<path d="M814.55 577.75 L829.90 577.75" stroke="#b65c5c" stroke-width="1" fill="none"/>
<text x="836.90" y="580.35" font-size="6.9" text-anchor="start" fill="#969696">I3</text>
<text x="820.70" y="576.35" font-size="6.4" text-anchor="middle" fill="#969696">3</text>
<path d="M875.95 577.75 L891.30 577.75" stroke="#b65c5c" stroke-width="1" fill="none"/>
<text x="868.75" y="580.35" font-size="6.9" text-anchor="end" fill="#969696">O3</text>
<text x="886.45" y="576.35" font-size="6.4" text-anchor="middle" fill="#969696">16</text>
<path d="M814.55 585.42 L829.90 585.42" stroke="#b65c5c" stroke-width="1" fill="none"/>
<text x="836.90" y="588.02" font-size="6.9" text-anchor="start" fill="#969696">I4</text>
<text x="820.70" y="584.02" font-size="6.4" text-anchor="middle" fill="#969696">4</text>
<path d="M875.95 585.42 L891.30 585.42" stroke="#b65c5c" stroke-width="1" fill="none"/>
<text x="868.75" y="588.02" font-size="6.9" text-anchor="end" fill="#969696">O4</text>
<text x="886.45" y="584.02" font-size="6.4" text-anchor="middle" fill="#969696">15</text>
<path d="M814.55 593.10 L829.90 593.10" stroke="#b65c5c" stroke-width="1" fill="none"/>
<text x="836.90" y="595.70" font-size="6.9" text-anchor="start" fill="#969696">I5</text>
<text x="820.70" y="591.70" font-size="6.4" text-anchor="middle" fill="#969696">5</text>
<path d="M875.95 593.10 L891.30 593.10" stroke="#b65c5c" stroke-width="1" fill="none"/>
<text x="868.75" y="595.70" font-size="6.9" text-anchor="end" fill="#969696">O5</text>
<text x="886.45" y="591.70" font-size="6.4" text-anchor="middle" fill="#969696">14</text>
<path d="M814.55 600.77 L829.90 600.77" stroke="#b65c5c" stroke-width="1" fill="none"/>
<text x="836.90" y="603.38" font-size="6.9" text-anchor="start" fill="#969696">I6</text>
<text x="820.70" y="599.38" font-size="6.4" text-anchor="middle" fill="#969696">6</text>
<path d="M875.95 600.77 L891.30 600.77" stroke="#b65c5c" stroke-width="1" fill="none"/>
<text x="868.75" y="603.38" font-size="6.9" text-anchor="end" fill="#969696">O6</text>
<text x="886.45" y="599.38" font-size="6.4" text-anchor="middle" fill="#969696">13</text>
<path d="M814.55 608.45 L829.90 608.45" stroke="#b65c5c" stroke-width="1" fill="none"/>
<text x="836.90" y="611.05" font-size="6.9" text-anchor="start" fill="#969696">I7</text>
<text x="820.70" y="607.05" font-size="6.4" text-anchor="middle" fill="#969696">7</text>
<path d="M875.95 608.45 L891.30 608.45" stroke="#b65c5c" stroke-width="1" fill="none"/>
<text x="868.75" y="611.05" font-size="6.9" text-anchor="end" fill="#969696">O7</text>
<text x="886.45" y="607.05" font-size="6.4" text-anchor="middle" fill="#969696">12</text>
<path d="M814.55 616.12 L829.90 616.12" stroke="#b65c5c" stroke-width="1" fill="none"/>
<text x="836.90" y="618.73" font-size="6.9" text-anchor="start" fill="#969696">I8</text>
<text x="820.70" y="614.73" font-size="6.4" text-anchor="middle" fill="#969696">8</text>
<path d="M875.95 616.12 L891.30 616.12" stroke="#b65c5c" stroke-width="1" fill="none"/>
<text x="868.75" y="618.73" font-size="6.9" text-anchor="end" fill="#969696">O8</text>
<text x="886.45" y="614.73" font-size="6.4" text-anchor="middle" fill="#969696">11</text>
<path d="M814.55 623.80 L829.90 623.80" stroke="#b65c5c" stroke-width="1" fill="none"/>
<text x="836.90" y="626.40" font-size="6.9" text-anchor="start" fill="#969696">GND</text>
<text x="820.70" y="622.40" font-size="6.4" text-anchor="middle" fill="#969696">9</text>
<path d="M875.95 623.80 L891.30 623.80" stroke="#b65c5c" stroke-width="1" fill="none"/>
<text x="868.75" y="626.40" font-size="6.9" text-anchor="end" fill="#969696">CD+</text>
<text x="886.45" y="622.40" font-size="6.4" text-anchor="middle" fill="#969696">10</text>
<path d="M454.18 562.40 L454.18 585.42" stroke="#52ad52" stroke-width="1" fill="none"/>
<path d="M454.18 562.40 L461.85 562.40" stroke="#52ad52" stroke-width="1" fill="none"/>
<path d="M454.18 570.07 L461.85 570.07" stroke="#52ad52" stroke-width="1" fill="none"/>
<path d="M454.18 577.75 L461.85 577.75" stroke="#52ad52" stroke-width="1" fill="none"/>
<path d="M454.18 585.42 L461.85 585.42" stroke="#52ad52" stroke-width="1" fill="none"/>
<circle cx="435.20" cy="577.75" r="3.90" stroke="#a33030" stroke-width="1.2" fill="none"/>
<path d="M439.10 577.75 L446.70 577.75" stroke="#b65c5c" stroke-width="1" fill="none"/>
<path d="M446.70 577.75 L454.18 577.75" stroke="#52ad52" stroke-width="1" fill="none"/>
<text x="430.40" y="580.55" font-size="7.5" text-anchor="middle" fill="#969696" transform="rotate(-90 430.40 580.55)">VSS</text>
<circle cx="435.20" cy="600.77" r="3.90" stroke="#a33030" stroke-width="1.2" fill="none"/>
<path d="M439.10 600.77 L446.70 600.77" stroke="#b65c5c" stroke-width="1" fill="none"/>
<path d="M446.70 600.77 L461.85 600.77" stroke="#52ad52" stroke-width="1" fill="none"/>
<text x="430.40" y="598.48" font-size="7.5" text-anchor="middle" fill="#969696" transform="rotate(-90 430.40 598.48)">VDD</text>
<path d="M553.95 562.40 L653.40 562.40" stroke="#52ad52" stroke-width="1" fill="none"/>
<path d="M553.95 570.07 L653.40 570.07" stroke="#52ad52" stroke-width="1" fill="none"/>
<path d="M553.95 577.75 L653.40 577.75" stroke="#52ad52" stroke-width="1" fill="none"/>
<path d="M553.95 585.42 L653.40 585.42" stroke="#52ad52" stroke-width="1" fill="none"/>
<circle cx="626.80" cy="600.77" r="3.90" stroke="#a33030" stroke-width="1.2" fill="none"/>
<path d="M630.70 600.77 L638.40 600.77" stroke="#b65c5c" stroke-width="1" fill="none"/>
<path d="M638.40 600.77 L653.40 600.77" stroke="#52ad52" stroke-width="1" fill="none"/>
<text x="631.30" y="593.27" font-size="7.5" text-anchor="middle" fill="#969696">VDD</text>
<path d="M653.40 616.12 L646.20 616.12 L646.20 624.62" stroke="#52ad52" stroke-width="1" fill="none"/>
<path d="M646.20 624.62 L646.20 631.12" stroke="#b65c5c" stroke-width="1" fill="none"/>
<circle cx="646.20" cy="635.02" r="3.90" stroke="#a33030" stroke-width="1.2" fill="none"/>
<text x="648.00" y="646.12" font-size="7.5" text-anchor="middle" fill="#969696">VSS</text>
<path d="M730.15 562.40 L783.88 562.40 L783.88 577.75 L814.55 577.75" stroke="#52ad52" stroke-width="1" fill="none"/>
<path d="M730.15 570.07 L776.20 570.07 L776.20 585.42 L814.55 585.42" stroke="#52ad52" stroke-width="1" fill="none"/>
<path d="M730.15 577.75 L768.52 577.75 L768.52 593.10 L814.55 593.10" stroke="#52ad52" stroke-width="1" fill="none"/>
<path d="M730.15 585.42 L760.85 585.42 L760.85 600.77 L814.55 600.77" stroke="#52ad52" stroke-width="1" fill="none"/>
<path d="M730.15 593.10 L753.17 593.10 L753.17 608.45 L814.55 608.45" stroke="#52ad52" stroke-width="1" fill="none"/>
<path d="M730.15 600.77 L737.82 600.77 L737.82 547.05 L799.23 547.05 L799.23 562.40 L814.55 562.40" stroke="#52ad52" stroke-width="1" fill="none"/>
<path d="M730.15 608.45 L745.50 608.45 L745.50 554.73 L791.55 554.73 L791.55 570.07 L814.55 570.07" stroke="#52ad52" stroke-width="1" fill="none"/>
<path d="M814.55 616.12 L784.10 616.12 L784.10 627.80" stroke="#52ad52" stroke-width="1" fill="none"/>
<path d="M784.10 623.80 L814.55 623.80" stroke="#52ad52" stroke-width="1" fill="none"/>
<path d="M784.10 627.80 L784.10 638.40" stroke="#b65c5c" stroke-width="1" fill="none"/>
<circle cx="784.10" cy="642.40" r="3.90" stroke="#a33030" stroke-width="1.2" fill="none"/>
<text x="786.10" y="653.30" font-size="7.5" text-anchor="middle" fill="#969696">VSS</text>
<path d="M891.30 623.80 L899.20 623.80 L899.20 631.80" stroke="#52ad52" stroke-width="1" fill="none"/>
<path d="M899.20 631.80 L899.20 638.00" stroke="#b65c5c" stroke-width="1" fill="none"/>
<circle cx="899.20" cy="641.90" r="3.90" stroke="#a33030" stroke-width="1.2" fill="none"/>
<text x="889.50" y="640.00" font-size="7.5" text-anchor="middle" fill="#969696" transform="rotate(-90 889.50 640.00)">VDD</text>
<path d="M891.30 562.40 L914.32 562.40" stroke="#52ad52" stroke-width="1" fill="none"/>
<path d="M914.32 562.40 L922.00 562.40" stroke="#b65c5c" stroke-width="1" fill="none"/>
<rect x="922.00" y="559.80" width="15.70" height="5.20" stroke="#8e1c1c" stroke-width="1.1" fill="none"/>
<path d="M937.70 562.40 L945.00 562.40" stroke="#b65c5c" stroke-width="1" fill="none"/>
<path d="M891.30 570.07 L914.32 570.07" stroke="#52ad52" stroke-width="1" fill="none"/>
<path d="M914.32 570.07 L922.00 570.07" stroke="#b65c5c" stroke-width="1" fill="none"/>
<rect x="922.00" y="567.47" width="15.70" height="5.20" stroke="#8e1c1c" stroke-width="1.1" fill="none"/>
<path d="M937.70 570.07 L945.00 570.07" stroke="#b65c5c" stroke-width="1" fill="none"/>
<path d="M891.30 577.75 L914.32 577.75" stroke="#52ad52" stroke-width="1" fill="none"/>
<path d="M914.32 577.75 L922.00 577.75" stroke="#b65c5c" stroke-width="1" fill="none"/>
<rect x="922.00" y="575.15" width="15.70" height="5.20" stroke="#8e1c1c" stroke-width="1.1" fill="none"/>
<path d="M937.70 577.75 L945.00 577.75" stroke="#b65c5c" stroke-width="1" fill="none"/>
<path d="M891.30 585.42 L914.32 585.42" stroke="#52ad52" stroke-width="1" fill="none"/>
<path d="M914.32 585.42 L922.00 585.42" stroke="#b65c5c" stroke-width="1" fill="none"/>
<rect x="922.00" y="582.82" width="15.70" height="5.20" stroke="#8e1c1c" stroke-width="1.1" fill="none"/>
<path d="M937.70 585.42 L945.00 585.42" stroke="#b65c5c" stroke-width="1" fill="none"/>
<path d="M891.30 593.10 L914.32 593.10" stroke="#52ad52" stroke-width="1" fill="none"/>
<path d="M914.32 593.10 L922.00 593.10" stroke="#b65c5c" stroke-width="1" fill="none"/>
<rect x="922.00" y="590.50" width="15.70" height="5.20" stroke="#8e1c1c" stroke-width="1.1" fill="none"/>
<path d="M937.70 593.10 L945.00 593.10" stroke="#b65c5c" stroke-width="1" fill="none"/>
<path d="M891.30 600.77 L914.32 600.77" stroke="#52ad52" stroke-width="1" fill="none"/>
<path d="M914.32 600.77 L922.00 600.77" stroke="#b65c5c" stroke-width="1" fill="none"/>
<rect x="922.00" y="598.17" width="15.70" height="5.20" stroke="#8e1c1c" stroke-width="1.1" fill="none"/>
<path d="M937.70 600.77 L945.00 600.77" stroke="#b65c5c" stroke-width="1" fill="none"/>
<path d="M891.30 608.45 L914.32 608.45" stroke="#52ad52" stroke-width="1" fill="none"/>
<path d="M914.32 608.45 L922.00 608.45" stroke="#b65c5c" stroke-width="1" fill="none"/>
<rect x="922.00" y="605.85" width="15.70" height="5.20" stroke="#8e1c1c" stroke-width="1.1" fill="none"/>
<path d="M937.70 608.45 L945.00 608.45" stroke="#b65c5c" stroke-width="1" fill="none"/>
<text x="918.20" y="557.90" font-size="8" text-anchor="start" fill="#969696">R15</text>
<text x="917.60" y="565.40" font-size="7.5" text-anchor="start" fill="#969696">R</text>
<text x="921.50" y="565.40" font-size="7.5" text-anchor="start" fill="#969696">16</text>
<text x="917.60" y="573.07" font-size="7.5" text-anchor="start" fill="#969696">R</text>
<text x="921.50" y="573.07" font-size="7.5" text-anchor="start" fill="#969696">17</text>
<text x="917.60" y="580.75" font-size="7.5" text-anchor="start" fill="#969696">R</text>
<text x="921.50" y="580.75" font-size="7.5" text-anchor="start" fill="#969696">18</text>
<text x="917.60" y="588.42" font-size="7.5" text-anchor="start" fill="#969696">R</text>
<text x="921.50" y="588.42" font-size="7.5" text-anchor="start" fill="#969696">19</text>
<text x="917.60" y="596.10" font-size="7.5" text-anchor="start" fill="#969696">R</text>
<text x="921.50" y="596.10" font-size="7.5" text-anchor="start" fill="#969696">20</text>
<text x="917.60" y="603.77" font-size="7.5" text-anchor="start" fill="#969696">R</text>
<text x="921.50" y="603.77" font-size="7.5" text-anchor="start" fill="#969696">21</text>
<path d="M1014.60 562.40 L1021.00 562.40" stroke="#b65c5c" stroke-width="1" fill="none"/>
<rect x="1021" y="561.10" width="9" height="2.6" fill="#7d0000"/>
<text x="1033.00" y="565.40" font-size="7.4" text-anchor="start" fill="#969696">X3-9</text>
<path d="M1014.60 570.07 L1021.00 570.07" stroke="#b65c5c" stroke-width="1" fill="none"/>
<rect x="1021" y="568.77" width="9" height="2.6" fill="#7d0000"/>
<text x="1033.00" y="573.07" font-size="7.4" text-anchor="start" fill="#969696">X3-10</text>
<path d="M1014.60 577.75 L1021.00 577.75" stroke="#b65c5c" stroke-width="1" fill="none"/>
<rect x="1021" y="576.45" width="9" height="2.6" fill="#7d0000"/>
<text x="1033.00" y="580.75" font-size="7.4" text-anchor="start" fill="#969696">X3-8</text>
<path d="M1014.60 585.42 L1021.00 585.42" stroke="#b65c5c" stroke-width="1" fill="none"/>
<rect x="1021" y="584.12" width="9" height="2.6" fill="#7d0000"/>
<text x="1033.00" y="588.42" font-size="7.4" text-anchor="start" fill="#969696">X3-7</text>
<path d="M1014.60 593.10 L1021.00 593.10" stroke="#b65c5c" stroke-width="1" fill="none"/>
<rect x="1021" y="591.80" width="9" height="2.6" fill="#7d0000"/>
<text x="1033.00" y="596.10" font-size="7.4" text-anchor="start" fill="#969696">X3-6</text>
<path d="M1014.60 600.77 L1021.00 600.77" stroke="#b65c5c" stroke-width="1" fill="none"/>
<rect x="1021" y="599.48" width="9" height="2.6" fill="#7d0000"/>
<text x="1033.00" y="603.77" font-size="7.4" text-anchor="start" fill="#969696">X3-5</text>
<path d="M1014.60 608.45 L1021.00 608.45" stroke="#b65c5c" stroke-width="1" fill="none"/>
<rect x="1021" y="607.15" width="9" height="2.6" fill="#7d0000"/>
<text x="1033.00" y="611.45" font-size="7.4" text-anchor="start" fill="#969696">X3-4</text>
<path d="M1014.60 616.12 L1021.00 616.12" stroke="#b65c5c" stroke-width="1" fill="none"/>
<rect x="1021" y="614.83" width="9" height="2.6" fill="#7d0000"/>
<text x="1033.00" y="619.12" font-size="7.4" text-anchor="start" fill="#969696">X3-3</text>
<path d="M1014.60 623.80 L1021.00 623.80" stroke="#b65c5c" stroke-width="1" fill="none"/>
<rect x="1021" y="622.50" width="9" height="2.6" fill="#7d0000"/>
<text x="1033.00" y="626.80" font-size="7.4" text-anchor="start" fill="#969696">X3-2</text>
<path d="M1014.60 631.48 L1021.00 631.48" stroke="#b65c5c" stroke-width="1" fill="none"/>
<rect x="1021" y="630.18" width="9" height="2.6" fill="#7d0000"/>
<text x="1033.00" y="634.48" font-size="7.4" text-anchor="start" fill="#969696">X3-1</text>
<path d="M945.00 562.40 L1014.60 562.40" stroke="#52ad52" stroke-width="1" fill="none"/>
<path d="M945.00 570.07 L1014.60 570.07" stroke="#52ad52" stroke-width="1" fill="none"/>
<path d="M945.00 577.75 L1014.60 577.75" stroke="#52ad52" stroke-width="1" fill="none"/>
<path d="M945.00 585.42 L999.20 585.42 L999.20 593.10 L1014.60 593.10" stroke="#52ad52" stroke-width="1" fill="none"/>
<path d="M945.00 593.10 L991.50 593.10 L991.50 608.45 L1014.60 608.45" stroke="#52ad52" stroke-width="1" fill="none"/>
<path d="M945.00 600.77 L983.60 600.77 L983.60 623.80 L1014.60 623.80" stroke="#52ad52" stroke-width="1" fill="none"/>
<path d="M945.00 608.45 L976.00 608.45 L976.00 631.48 L1014.60 631.48" stroke="#52ad52" stroke-width="1" fill="none"/>
<circle cx="1006.50" cy="527.86" r="4.10" stroke="#a33030" stroke-width="1.2" fill="none"/>
<path d="M1006.50 531.96 L1006.50 539.16" stroke="#b65c5c" stroke-width="1" fill="none"/>
<path d="M1006.50 539.16 L1006.50 616.12 L1014.60 616.12" stroke="#52ad52" stroke-width="1" fill="none"/>
<path d="M1006.50 585.42 L1014.60 585.42" stroke="#52ad52" stroke-width="1" fill="none"/>
<path d="M1006.50 600.77 L1014.60 600.77" stroke="#52ad52" stroke-width="1" fill="none"/>
<text x="1019.00" y="531.26" font-size="7.5" text-anchor="middle" fill="#969696" transform="rotate(-90 1019.00 531.26)">VDD</text>
<circle cx="262.70" cy="144.50" r="3.90" stroke="#a33030" stroke-width="1.2" fill="none"/>
<text x="264.00" y="138.70" font-size="7.5" text-anchor="middle" fill="#969696">VDD</text>
<path d="M262.70 148.40 L262.70 156.00" stroke="#b65c5c" stroke-width="1" fill="none"/>
<path d="M262.70 156.00 L262.70 163.30 L400.60 163.30" stroke="#52ad52" stroke-width="1" fill="none"/>
<path d="M262.70 201.60 L400.60 201.60" stroke="#52ad52" stroke-width="1" fill="none"/>
<path d="M262.70 201.60 L262.70 209.50" stroke="#52ad52" stroke-width="1" fill="none"/>
<path d="M262.70 209.50 L262.70 217.10" stroke="#b65c5c" stroke-width="1" fill="none"/>
<circle cx="262.70" cy="221.00" r="3.90" stroke="#a33030" stroke-width="1.2" fill="none"/>
<text x="264.00" y="230.50" font-size="7.5" text-anchor="middle" fill="#969696">VSS</text>
<path d="M285.30 163.30 L285.30 171.50" stroke="#52ad52" stroke-width="1" fill="none"/>
<path d="M285.30 171.50 L285.30 180.50" stroke="#b65c5c" stroke-width="1" fill="none"/>
<rect x="278.80" y="179.6" width="13" height="2" fill="#7d0000"/>
<rect x="278.80" y="183.6" width="13" height="2" fill="#7d0000"/>
<path d="M285.30 185.00 L285.30 194.00" stroke="#b65c5c" stroke-width="1" fill="none"/>
<path d="M285.30 194.00 L285.30 201.60" stroke="#52ad52" stroke-width="1" fill="none"/>
<text x="289.50" y="178.50" font-size="7.5" text-anchor="start" fill="#969696">C1</text>
<path d="M308.35 163.30 L308.35 171.50" stroke="#52ad52" stroke-width="1" fill="none"/>
<path d="M308.35 171.50 L308.35 180.50" stroke="#b65c5c" stroke-width="1" fill="none"/>
<rect x="301.85" y="179.6" width="13" height="2" fill="#7d0000"/>
<rect x="301.85" y="183.6" width="13" height="2" fill="#7d0000"/>
<path d="M308.35 185.00 L308.35 194.00" stroke="#b65c5c" stroke-width="1" fill="none"/>
<path d="M308.35 194.00 L308.35 201.60" stroke="#52ad52" stroke-width="1" fill="none"/>
<text x="312.55" y="178.50" font-size="7.5" text-anchor="start" fill="#969696">C2</text>
<path d="M331.40 163.30 L331.40 171.50" stroke="#52ad52" stroke-width="1" fill="none"/>
<path d="M331.40 171.50 L331.40 180.50" stroke="#b65c5c" stroke-width="1" fill="none"/>
<rect x="324.90" y="179.6" width="13" height="2" fill="#7d0000"/>
<rect x="324.90" y="183.6" width="13" height="2" fill="#7d0000"/>
<path d="M331.40 185.00 L331.40 194.00" stroke="#b65c5c" stroke-width="1" fill="none"/>
<path d="M331.40 194.00 L331.40 201.60" stroke="#52ad52" stroke-width="1" fill="none"/>
<text x="335.60" y="178.50" font-size="7.5" text-anchor="start" fill="#969696">C3</text>
<path d="M354.45 163.30 L354.45 171.50" stroke="#52ad52" stroke-width="1" fill="none"/>
<path d="M354.45 171.50 L354.45 180.50" stroke="#b65c5c" stroke-width="1" fill="none"/>
<rect x="347.95" y="179.6" width="13" height="2" fill="#7d0000"/>
<rect x="347.95" y="183.6" width="13" height="2" fill="#7d0000"/>
<path d="M354.45 185.00 L354.45 194.00" stroke="#b65c5c" stroke-width="1" fill="none"/>
<path d="M354.45 194.00 L354.45 201.60" stroke="#52ad52" stroke-width="1" fill="none"/>
<text x="358.65" y="178.50" font-size="7.5" text-anchor="start" fill="#969696">C4</text>
<path d="M377.50 163.30 L377.50 171.50" stroke="#52ad52" stroke-width="1" fill="none"/>
<path d="M377.50 171.50 L377.50 180.50" stroke="#b65c5c" stroke-width="1" fill="none"/>
<rect x="371.00" y="179.6" width="13" height="2" fill="#7d0000"/>
<rect x="371.00" y="183.6" width="13" height="2" fill="#7d0000"/>
<path d="M377.50 185.00 L377.50 194.00" stroke="#b65c5c" stroke-width="1" fill="none"/>
<path d="M377.50 194.00 L377.50 201.60" stroke="#52ad52" stroke-width="1" fill="none"/>
<text x="381.70" y="178.50" font-size="7.5" text-anchor="start" fill="#969696">C5</text>
<path d="M400.55 163.30 L400.55 171.50" stroke="#52ad52" stroke-width="1" fill="none"/>
<path d="M400.55 171.50 L400.55 180.50" stroke="#b65c5c" stroke-width="1" fill="none"/>
<rect x="394.05" y="179.6" width="13" height="2" fill="#7d0000"/>
<rect x="394.05" y="183.6" width="13" height="2" fill="#7d0000"/>
<path d="M400.55 185.00 L400.55 194.00" stroke="#b65c5c" stroke-width="1" fill="none"/>
<path d="M400.55 194.00 L400.55 201.60" stroke="#52ad52" stroke-width="1" fill="none"/>
<text x="404.75" y="178.50" font-size="7.5" text-anchor="start" fill="#969696">C6</text>
<circle cx="212.60" cy="431.60" r="3.60" stroke="#8a1010" stroke-width="1.8" fill="none"/>
<path d="M216.40 431.60 L224.00 431.60" stroke="#b65c5c" stroke-width="1" fill="none"/>
<text x="207.50" y="434.40" font-size="7.5" text-anchor="end" fill="#969696">X4-1</text>
<circle cx="212.60" cy="446.95" r="3.60" stroke="#8a1010" stroke-width="1.8" fill="none"/>
<path d="M216.40 446.95 L224.00 446.95" stroke="#b65c5c" stroke-width="1" fill="none"/>
<text x="207.50" y="449.75" font-size="7.5" text-anchor="end" fill="#969696">X4-2</text>
<circle cx="212.60" cy="462.30" r="3.60" stroke="#8a1010" stroke-width="1.8" fill="none"/>
<path d="M216.40 462.30 L224.00 462.30" stroke="#b65c5c" stroke-width="1" fill="none"/>
<text x="207.50" y="465.10" font-size="7.5" text-anchor="end" fill="#969696">X4-3</text>
<circle cx="212.60" cy="477.65" r="3.60" stroke="#8a1010" stroke-width="1.8" fill="none"/>
<path d="M216.40 477.65 L224.00 477.65" stroke="#b65c5c" stroke-width="1" fill="none"/>
<text x="207.50" y="480.45" font-size="7.5" text-anchor="end" fill="#969696">X4-4</text>
<circle cx="212.60" cy="493.00" r="3.60" stroke="#8a1010" stroke-width="1.8" fill="none"/>
<path d="M216.40 493.00 L224.00 493.00" stroke="#b65c5c" stroke-width="1" fill="none"/>
<text x="207.50" y="495.80" font-size="7.5" text-anchor="end" fill="#969696">X4-5</text>
<circle cx="212.60" cy="508.35" r="3.60" stroke="#8a1010" stroke-width="1.8" fill="none"/>
<path d="M216.40 508.35 L224.00 508.35" stroke="#b65c5c" stroke-width="1" fill="none"/>
<text x="207.50" y="511.15" font-size="7.5" text-anchor="end" fill="#969696">X4-6</text>
<circle cx="212.60" cy="523.70" r="3.60" stroke="#8a1010" stroke-width="1.8" fill="none"/>
<path d="M216.40 523.70 L224.00 523.70" stroke="#b65c5c" stroke-width="1" fill="none"/>
<text x="207.50" y="526.50" font-size="7.5" text-anchor="end" fill="#969696">X4-7</text>
<circle cx="212.60" cy="539.05" r="3.60" stroke="#8a1010" stroke-width="1.8" fill="none"/>
<path d="M216.40 539.05 L224.00 539.05" stroke="#b65c5c" stroke-width="1" fill="none"/>
<text x="207.50" y="541.85" font-size="7.5" text-anchor="end" fill="#969696">X4-8</text>
<circle cx="212.60" cy="554.40" r="3.60" stroke="#8a1010" stroke-width="1.8" fill="none"/>
<path d="M216.40 554.40 L224.00 554.40" stroke="#b65c5c" stroke-width="1" fill="none"/>
<text x="207.50" y="557.20" font-size="7.5" text-anchor="end" fill="#969696">X4-9</text>
<circle cx="212.60" cy="569.75" r="3.60" stroke="#8a1010" stroke-width="1.8" fill="none"/>
<path d="M216.40 569.75 L224.00 569.75" stroke="#b65c5c" stroke-width="1" fill="none"/>
<text x="207.50" y="572.55" font-size="7.5" text-anchor="end" fill="#969696">X4-10</text>
<circle cx="262.40" cy="343.60" r="3.90" stroke="#a33030" stroke-width="1.2" fill="none"/>
<text x="264.00" y="338.00" font-size="7.5" text-anchor="middle" fill="#969696">VDD</text>
<circle cx="285.60" cy="343.60" r="3.90" stroke="#a33030" stroke-width="1.2" fill="none"/>
<text x="284.50" y="338.80" font-size="7.5" text-anchor="middle" fill="#969696">VSS</text>
<path d="M262.40 347.50 L262.40 355.00" stroke="#b65c5c" stroke-width="1" fill="none"/>
<path d="M285.60 347.50 L285.60 355.00" stroke="#b65c5c" stroke-width="1" fill="none"/>
<path d="M262.40 355.00 L262.40 447.00 L224.00 447.00" stroke="#52ad52" stroke-width="1" fill="none"/>
<path d="M224.00 431.60 L262.40 431.60" stroke="#52ad52" stroke-width="1" fill="none"/>
<path d="M285.60 355.00 L285.60 462.40 L224.00 462.40" stroke="#52ad52" stroke-width="1" fill="none"/>
<path d="M224.00 477.70 L362.30 477.70" stroke="#52ad52" stroke-width="1" fill="none"/>
<path d="M224.00 493.05 L370.20 493.05" stroke="#52ad52" stroke-width="1" fill="none"/>
<path d="M224.00 508.40 L377.70 508.40" stroke="#52ad52" stroke-width="1" fill="none"/>
<path d="M461.85 316.93 L377.70 316.93 L377.70 508.40" stroke="#52ad52" stroke-width="1" fill="none"/>
<path d="M461.85 324.60 L370.20 324.60 L370.20 493.05" stroke="#52ad52" stroke-width="1" fill="none"/>
<path d="M461.85 332.27 L362.30 332.27 L362.30 631.48 L461.85 631.48" stroke="#52ad52" stroke-width="1" fill="none"/>
<path d="M461.85 485.77 L362.30 485.77" stroke="#52ad52" stroke-width="1" fill="none"/>
<path d="M553.95 316.93 L561.50 316.93 L561.50 362.70 L408.40 362.70 L408.40 470.43 L461.85 470.43" stroke="#52ad52" stroke-width="1" fill="none"/>
<path d="M553.95 309.25 L569.40 309.25 L569.40 370.10 L400.50 370.10 L400.50 478.10 L461.85 478.10" stroke="#52ad52" stroke-width="1" fill="none"/>
<path d="M553.95 470.43 L561.50 470.43 L561.50 508.40 L408.40 508.40 L408.40 616.12 L461.85 616.12" stroke="#52ad52" stroke-width="1" fill="none"/>
<path d="M553.95 462.75 L569.40 462.75 L569.40 516.00 L400.50 516.00 L400.50 623.80 L461.85 623.80" stroke="#52ad52" stroke-width="1" fill="none"/>
<path d="M553.95 462.75 L593.00 462.75" stroke="#52ad52" stroke-width="1" fill="none"/>
<path d="M606.00 462.75 L653.40 462.75" stroke="#52ad52" stroke-width="1" fill="none"/>
<path d="M630.60 462.75 L630.60 523.90 L270.30 523.90 L270.30 585.00" stroke="#52ad52" stroke-width="1" fill="none"/>
<path d="M577.30 608.45 L577.30 478.10 L593.00 478.10" stroke="#52ad52" stroke-width="1" fill="none"/>
<path d="M606.00 478.10 L630.60 478.10" stroke="#52ad52" stroke-width="1" fill="none"/>
<path d="M553.95 608.45 L653.40 608.45" stroke="#52ad52" stroke-width="1" fill="none"/>
<path d="M593.00 462.75 L596.20 462.75" stroke="#b65c5c" stroke-width="1" fill="none"/>
<path d="M603.80 462.75 L606.00 462.75" stroke="#b65c5c" stroke-width="1" fill="none"/>
<path d="M596.2 459.15 L603.8 462.75 L596.2 466.35 Z" stroke="#8e1c1c" stroke-width="1.1" fill="none"/>
<path d="M603.80 458.95 L603.80 466.55" stroke="#8e1c1c" stroke-width="1.1" fill="none"/>
<text x="608.00" y="460.75" font-size="7.5" text-anchor="start" fill="#969696">D1</text>
<path d="M593.00 478.10 L596.20 478.10" stroke="#b65c5c" stroke-width="1" fill="none"/>
<path d="M603.80 478.10 L606.00 478.10" stroke="#b65c5c" stroke-width="1" fill="none"/>
<path d="M596.2 474.50 L603.8 478.10 L596.2 481.70 Z" stroke="#8e1c1c" stroke-width="1.1" fill="none"/>
<path d="M603.80 474.30 L603.80 481.90" stroke="#8e1c1c" stroke-width="1.1" fill="none"/>
<text x="608.00" y="476.10" font-size="7.5" text-anchor="start" fill="#969696">D2</text>
<path d="M300.70 508.40 L300.70 585.00" stroke="#52ad52" stroke-width="1" fill="none"/>
<path d="M308.60 493.05 L308.60 585.00" stroke="#52ad52" stroke-width="1" fill="none"/>
<path d="M316.40 477.70 L316.40 585.00" stroke="#52ad52" stroke-width="1" fill="none"/>
<rect x="262.40" y="592.50" width="62.10" height="27.00" stroke="#8e1c1c" stroke-width="1.4" fill="none"/>
<path d="M270.20 585.00 L270.20 596.20" stroke="#b65c5c" stroke-width="1" fill="none"/>
<rect x="267.70" y="596.20" width="5.00" height="15.80" stroke="#a84848" stroke-width="1" fill="none"/>
<path d="M270.20 612.00 L270.20 615.70" stroke="#b65c5c" stroke-width="1" fill="none"/>
<text x="268.40" y="591.00" font-size="5.2" text-anchor="middle" fill="#969696" transform="rotate(-90 268.40 591.00)">8</text>
<path d="M277.90 585.00 L277.90 596.20" stroke="#b65c5c" stroke-width="1" fill="none"/>
<rect x="275.40" y="596.20" width="5.00" height="15.80" stroke="#a84848" stroke-width="1" fill="none"/>
<path d="M277.90 612.00 L277.90 615.70" stroke="#b65c5c" stroke-width="1" fill="none"/>
<text x="276.10" y="591.00" font-size="5.2" text-anchor="middle" fill="#969696" transform="rotate(-90 276.10 591.00)">7</text>
<circle cx="277.90" cy="615.70" r="1.40" fill="#8e1c1c"/>
<path d="M285.60 585.00 L285.60 596.20" stroke="#b65c5c" stroke-width="1" fill="none"/>
<rect x="283.10" y="596.20" width="5.00" height="15.80" stroke="#a84848" stroke-width="1" fill="none"/>
<path d="M285.60 612.00 L285.60 615.70" stroke="#b65c5c" stroke-width="1" fill="none"/>
<text x="283.80" y="591.00" font-size="5.2" text-anchor="middle" fill="#969696" transform="rotate(-90 283.80 591.00)">6</text>
<circle cx="285.60" cy="615.70" r="1.40" fill="#8e1c1c"/>
<path d="M293.30 585.00 L293.30 596.20" stroke="#b65c5c" stroke-width="1" fill="none"/>
<rect x="290.80" y="596.20" width="5.00" height="15.80" stroke="#a84848" stroke-width="1" fill="none"/>
<path d="M293.30 612.00 L293.30 615.70" stroke="#b65c5c" stroke-width="1" fill="none"/>
<text x="291.50" y="591.00" font-size="5.2" text-anchor="middle" fill="#969696" transform="rotate(-90 291.50 591.00)">5</text>
<circle cx="293.30" cy="615.70" r="1.40" fill="#8e1c1c"/>
<path d="M301.00 585.00 L301.00 596.20" stroke="#b65c5c" stroke-width="1" fill="none"/>
<rect x="298.50" y="596.20" width="5.00" height="15.80" stroke="#a84848" stroke-width="1" fill="none"/>
<path d="M301.00 612.00 L301.00 615.70" stroke="#b65c5c" stroke-width="1" fill="none"/>
<text x="299.20" y="591.00" font-size="5.2" text-anchor="middle" fill="#969696" transform="rotate(-90 299.20 591.00)">4</text>
<circle cx="301.00" cy="615.70" r="1.40" fill="#8e1c1c"/>
<path d="M308.70 585.00 L308.70 596.20" stroke="#b65c5c" stroke-width="1" fill="none"/>
<rect x="306.20" y="596.20" width="5.00" height="15.80" stroke="#a84848" stroke-width="1" fill="none"/>
<path d="M308.70 612.00 L308.70 615.70" stroke="#b65c5c" stroke-width="1" fill="none"/>
<text x="306.90" y="591.00" font-size="5.2" text-anchor="middle" fill="#969696" transform="rotate(-90 306.90 591.00)">3</text>
<circle cx="308.70" cy="615.70" r="1.40" fill="#8e1c1c"/>
<path d="M316.40 585.00 L316.40 596.20" stroke="#b65c5c" stroke-width="1" fill="none"/>
<rect x="313.90" y="596.20" width="5.00" height="15.80" stroke="#a84848" stroke-width="1" fill="none"/>
<path d="M316.40 612.00 L316.40 615.70" stroke="#b65c5c" stroke-width="1" fill="none"/>
<text x="314.60" y="591.00" font-size="5.2" text-anchor="middle" fill="#969696" transform="rotate(-90 314.60 591.00)">2</text>
<circle cx="316.40" cy="615.70" r="1.40" fill="#8e1c1c"/>
<path d="M270.20 615.70 L316.40 615.70" stroke="#b65c5c" stroke-width="1" fill="none"/>
<path d="M316.40 615.70 L316.40 630.00" stroke="#b65c5c" stroke-width="1" fill="none"/>
<path d="M316.40 630.00 L316.40 654.00" stroke="#52ad52" stroke-width="1" fill="none"/>
<path d="M316.40 654.00 L316.40 661.30" stroke="#b65c5c" stroke-width="1" fill="none"/>
<circle cx="316.40" cy="665.20" r="3.90" stroke="#a33030" stroke-width="1.2" fill="none"/>
<text x="318.00" y="676.00" font-size="7.5" text-anchor="middle" fill="#969696">VSS</text>
<text x="294.00" y="627.50" font-size="8" text-anchor="start" fill="#969696">RN1</text>
<text x="309.50" y="627.50" font-size="5" text-anchor="start" fill="#969696">...</text>
</g>
<!-- cursor -->
<path d="M1007 704.5 L1007 721 L1011 717 L1014 723.5 L1016.5 722.5 L1013.8 716.2 L1019 716.2 Z" fill="#111" stroke="#fff" stroke-width="1" stroke-linejoin="round"/>
</svg>
</body></html>
